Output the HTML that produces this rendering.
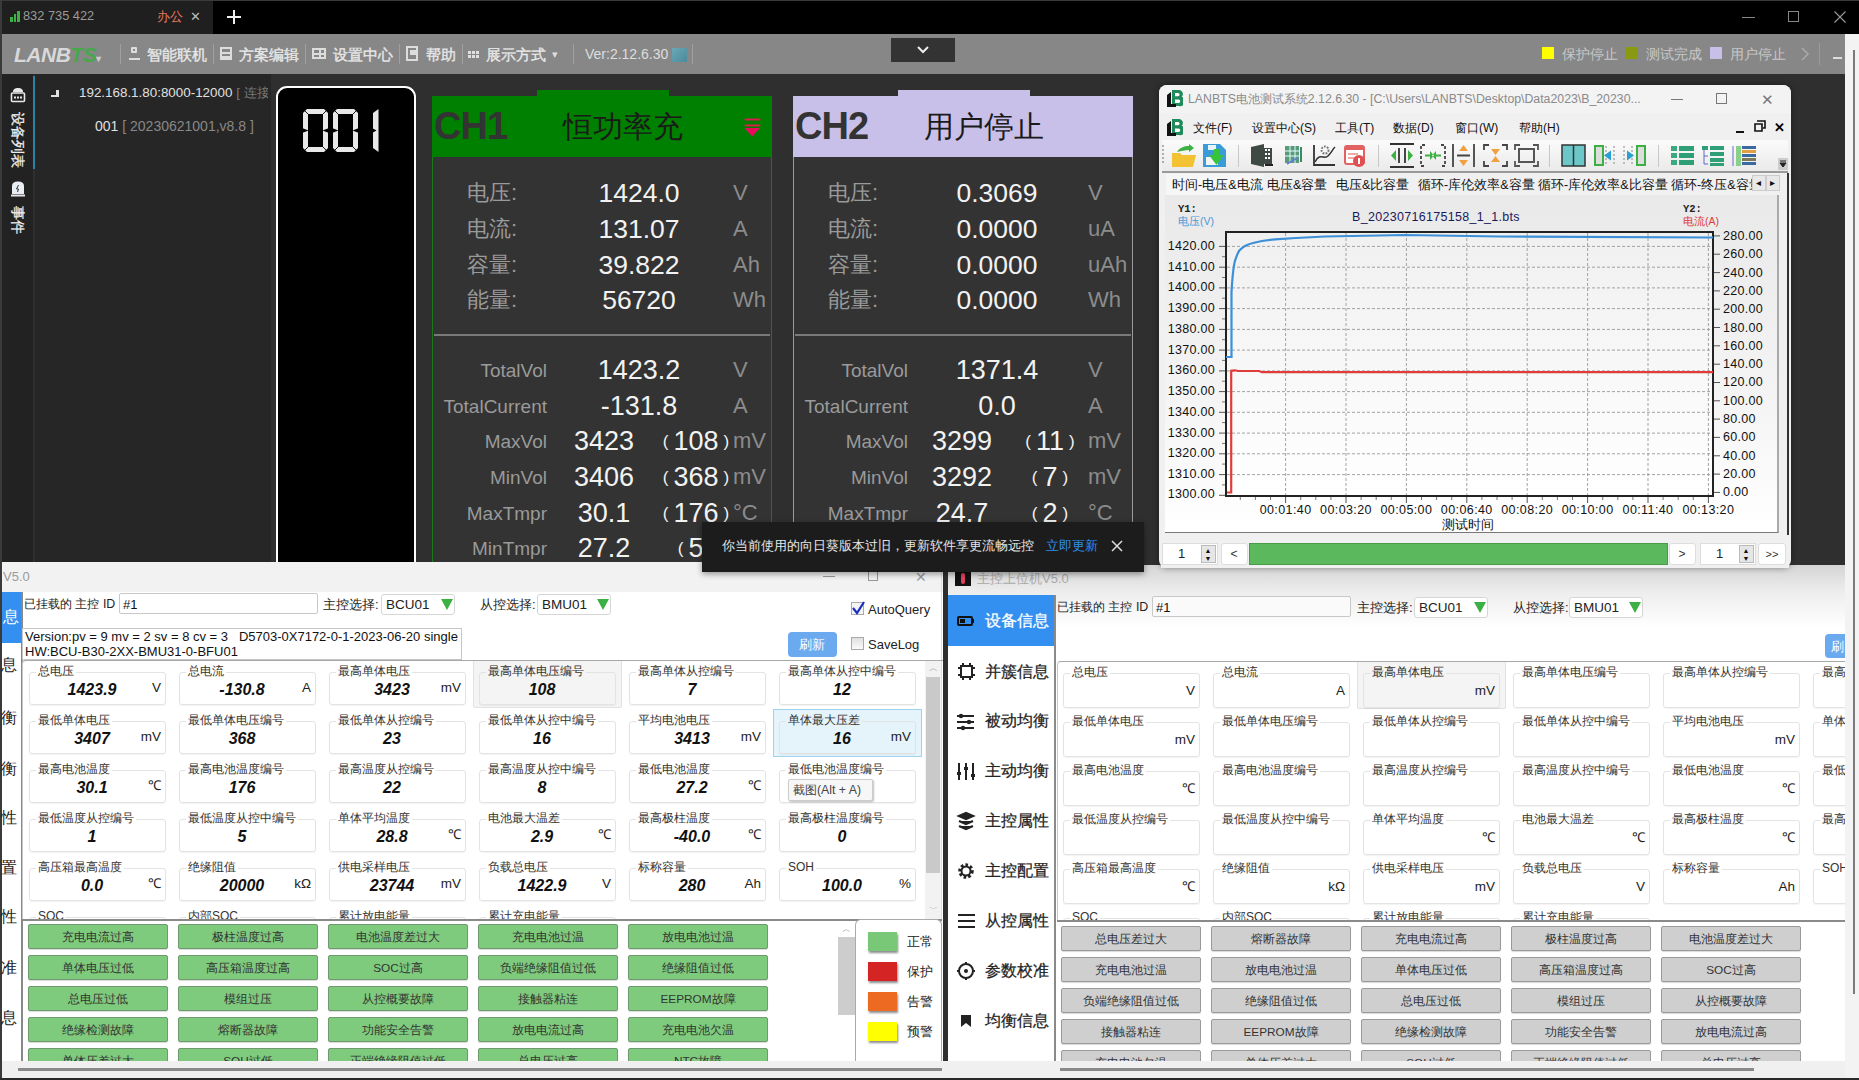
<!DOCTYPE html><html><head><meta charset="utf-8"><style>
*{margin:0;padding:0;box-sizing:border-box}
html,body{width:1859px;height:1080px;overflow:hidden;background:#2b2b2b;font-family:"Liberation Sans",sans-serif}
div{position:absolute}
.t{white-space:nowrap;line-height:1;transform:translateY(-50%)}
.r{white-space:nowrap;line-height:1;transform:translate(-100%,-50%)}
.c{white-space:nowrap;line-height:1;transform:translate(-50%,-50%)}
</style></head><body>
<div style="left:0px;top:0px;width:1859px;height:34px;background:#000"></div>
<div style="left:0px;top:0px;width:213px;height:34px;background:#1f1f1f"></div>
<div style="left:0px;top:0px;width:2px;height:1080px;background:#3a3a3a"></div>
<div style="left:10.0px;top:17px;width:2.5px;height:5px;background:#3cb043"></div>
<div style="left:13.5px;top:14px;width:2.5px;height:8px;background:#3cb043"></div>
<div style="left:17.0px;top:11px;width:2.5px;height:11px;background:#3cb043"></div>
<div class="t" style="left:23px;top:16px;font-size:12.8px;color:#9a9a9a">832 735 422</div>
<div class="t" style="left:157px;top:16px;font-size:13px;color:#e07a5f">办公</div>
<div class="t" style="left:190px;top:16px;font-size:13px;color:#bbb">✕</div>
<div style="left:227px;top:16px;width:14px;height:2px;background:#eee"></div>
<div style="left:233px;top:10px;width:2px;height:14px;background:#eee"></div>
<div style="left:1742px;top:17px;width:13px;height:1px;background:#888"></div>
<div style="left:1788px;top:11px;width:11px;height:11px;border:1px solid #888"></div>
<svg style="position:absolute;left:1833px;top:10px" width="14" height="14"><path d="M1.5 1.5L12.5 12.5M12.5 1.5L1.5 12.5" stroke="#999" stroke-width="1.1"/></svg>
<div style="left:0px;top:0px;width:1859px;height:1px;background:#3a3a3a"></div>
<div style="left:2px;top:34px;width:1843px;height:40px;background:#878787"></div>
<div class="t" style="left:14px;top:54px;font-size:21px;font-weight:bold;font-style:italic;color:#d9d9d9;letter-spacing:-0.5px">LANB<span style="color:#46a84a">TS</span><span style="font-size:10px;color:#ccc;font-style:normal">▾</span></div>
<div style="left:120px;top:44px;width:1px;height:20px;background:#a0a0a0"></div>
<div style="left:213px;top:44px;width:1px;height:20px;background:#a0a0a0"></div>
<div style="left:305px;top:44px;width:1px;height:20px;background:#a0a0a0"></div>
<div style="left:399px;top:44px;width:1px;height:20px;background:#a0a0a0"></div>
<div style="left:462px;top:44px;width:1px;height:20px;background:#a0a0a0"></div>
<div style="left:573px;top:44px;width:1px;height:20px;background:#a0a0a0"></div>
<div style="left:692px;top:44px;width:1px;height:20px;background:#a0a0a0"></div>
<div class="t" style="left:147px;top:54px;font-size:15px;color:#e8e8e8;-webkit-text-stroke:0.35px #e8e8e8">智能联机</div>
<div class="t" style="left:239px;top:54px;font-size:15px;color:#e8e8e8;-webkit-text-stroke:0.35px #e8e8e8">方案编辑</div>
<div class="t" style="left:333px;top:54px;font-size:15px;color:#e8e8e8;-webkit-text-stroke:0.35px #e8e8e8">设置中心</div>
<div class="t" style="left:426px;top:54px;font-size:15px;color:#e8e8e8;-webkit-text-stroke:0.35px #e8e8e8">帮助</div>
<div class="t" style="left:486px;top:54px;font-size:15px;color:#e8e8e8;-webkit-text-stroke:0.35px #e8e8e8">展示方式</div>
<div style="left:129px;top:47px;width:11px;height:13px;border-bottom:2px solid #ddd;"></div>
<div style="left:131px;top:47px;width:6px;height:6px;border:2px solid #ddd;border-radius:1px"></div>
<div style="left:220px;top:47px;width:12px;height:13px;border:2px solid #ddd;background:linear-gradient(#ddd,#ddd) 0 3px/100% 2px no-repeat,linear-gradient(#ddd,#ddd) 0 7px/100% 2px no-repeat"></div>
<div style="left:312px;top:48px;width:14px;height:11px;border:2px solid #ddd;background:linear-gradient(#ddd,#ddd) 5px 0/2px 100% no-repeat,linear-gradient(#ddd,#ddd) 0 3px/100% 2px no-repeat"></div>
<div style="left:406px;top:46px;width:12px;height:15px;border:2px solid #ddd;background:linear-gradient(#ddd,#ddd) 2px 2px/6px 5px no-repeat"></div>
<div style="left:468px;top:51px;width:12px;height:8px;background:linear-gradient(90deg,#e0e0e0 3px,transparent 3px) 0 0/4px 4px;mask:linear-gradient(#000 3px,transparent 3px) 0 0/4px 4px;-webkit-mask:linear-gradient(#000 3px,transparent 3px) 0 0/12px 4px"></div>
<div class="t" style="left:552px;top:54px;font-size:11px;color:#ddd">▾</div>
<div class="t" style="left:585px;top:54px;font-size:14px;color:#dedede">Ver:2.12.6.30</div>
<div style="left:672px;top:48px;width:15px;height:14px;background:linear-gradient(135deg,#6aa8b8,#4a8a9a)"></div>
<div style="left:891px;top:38px;width:64px;height:24px;background:#333"></div>
<svg style="position:absolute;left:916px;top:45px" width="14" height="10"><path d="M2 2 L7 7 L12 2" stroke="#eee" stroke-width="2" fill="none"/></svg>
<div style="left:1542px;top:47px;width:12px;height:12px;background:#ffff00"></div>
<div class="t" style="left:1562px;top:54px;font-size:14px;color:#c8c8c8">保护停止</div>
<div style="left:1626px;top:47px;width:12px;height:12px;background:#8a9a10"></div>
<div class="t" style="left:1646px;top:54px;font-size:14px;color:#c8c8c8">测试完成</div>
<div style="left:1710px;top:47px;width:12px;height:12px;background:#c8c0e8"></div>
<div class="t" style="left:1730px;top:54px;font-size:14px;color:#c8c8c8">用户停止</div>
<svg style="position:absolute;left:1800px;top:47px" width="10" height="14"><path d="M2 1 L8 7 L2 13" stroke="#aaa" stroke-width="1.5" fill="none"/></svg>
<div style="left:1819px;top:43px;width:1px;height:22px;background:#9a9a9a"></div>
<div style="left:1833px;top:57px;width:9px;height:2px;background:#ddd"></div>
<div style="left:1845px;top:34px;width:14px;height:1046px;background:#f3f3f3"></div>
<div style="left:1853px;top:50px;width:2px;height:944px;background:#7a7a7a"></div>
<div style="left:2px;top:74px;width:1843px;height:491px;background:#2f2f2f"></div>
<div style="left:2px;top:74px;width:31px;height:491px;background:#222"></div>
<div style="left:33px;top:76px;width:2px;height:93px;background:#2a82a4"></div>
<div style="left:35px;top:74px;width:236px;height:491px;background:#262626"></div>
<div style="left:56px;top:90px;width:2.5px;height:7px;background:#e0e0e0"></div>
<div style="left:51px;top:94.5px;width:7px;height:2.5px;background:#e0e0e0"></div>
<div style="left:0;top:0;width:1859px;height:1080px;clip-path:inset(0 1591px 0 0)">
<div class="t" style="left:79px;top:93px;font-size:13.4px;color:#e0e0e0">192.168.1.80:8000-12000 <span style="color:#777">[ 连接</span></div>
</div>
<div class="t" style="left:95px;top:126px;font-size:14px;color:#e0e0e0">001 <span style="color:#888">[ 20230621001,v8.8 ]</span></div>
<svg style="position:absolute;left:10px;top:87px" width="16" height="16"><path d="M3 5c0-3 2-4 5-4s5 1 5 4z" fill="#e8e8e8"/><rect x="1.5" y="6" width="13" height="8.5" rx="1" fill="none" stroke="#e8e8e8" stroke-width="1.6"/><path d="M4 10.5h2M7 10.5h2M10 10.5h2" stroke="#e8e8e8" stroke-width="2"/></svg>
<div style="left:9px;top:112px;width:18px;font-size:14px;line-height:18px;color:#eee;writing-mode:vertical-rl;text-orientation:sideways;-webkit-text-stroke:0.3px #eee">设备列表</div>
<svg style="position:absolute;left:11px;top:181px" width="14" height="16"><path d="M1 13V5c0-3 2-4.5 6-4.5s6 1.5 6 4.5v8z" fill="#e8eef4"/><path d="M7.5 4l-2 4h2l-1 3" stroke="#333" stroke-width="1" fill="none"/><rect x="0" y="13.5" width="14" height="2" fill="#e8e8e8"/></svg>
<div style="left:9px;top:206px;width:18px;font-size:14px;line-height:18px;color:#eee;writing-mode:vertical-rl;text-orientation:sideways;-webkit-text-stroke:0.3px #eee">事件</div>
<div style="left:276px;top:86px;width:140px;height:480px;background:#000;border:2px solid #fff;border-bottom:none;border-radius:11px 11px 0 0"></div>
<svg style="position:absolute;left:0;top:0" width="1859" height="1080"><path d="M307,109 L324,109 L328,113 L328,148 L324,152 L307,152 L303,148 L303,113 Z M308,114 L323,114 L323,147 L308,147 Z" fill="#e8e8e8" fill-rule="evenodd"/><path d="M303.8,109.8L308,114M327.2,109.8L323,114M303.8,151.2L308,147M327.2,151.2L323,147" stroke="#000" stroke-width="0.9"/><path d="M302,128.0 L308.5,130.5 L302,133.0Z M329,128.0 L322.5,130.5 L329,133.0Z" fill="#000"/><path d="M337,109 L354,109 L358,113 L358,148 L354,152 L337,152 L333,148 L333,113 Z M338,114 L353,114 L353,147 L338,147 Z" fill="#e8e8e8" fill-rule="evenodd"/><path d="M333.8,109.8L338,114M357.2,109.8L353,114M333.8,151.2L338,147M357.2,151.2L353,147" stroke="#000" stroke-width="0.9"/><path d="M332,128.0 L338.5,130.5 L332,133.0Z M359,128.0 L352.5,130.5 L359,133.0Z" fill="#000"/><path d="M373,113 L378.5,109 L378.5,152 L373,148 Z" fill="#e8e8e8"/><path d="M372,128 L376.5,130.5 L372,133Z" fill="#000"/></svg>
<div style="left:425px;top:74px;width:354px;height:491px;background:#2f2f2f"></div>
<div style="left:537px;top:90px;width:132px;height:7px;background:#008000"></div>
<div style="left:432px;top:96px;width:340px;height:470px;background:#333;border-left:1px solid #1a7a1a;border-right:1px solid #1a7a1a"></div>
<div style="left:432px;top:96px;width:340px;height:61px;background:#008000"></div>
<div class="t" style="left:434px;top:126px;font-size:38px;font-weight:bold;color:#333;letter-spacing:-1px">CH1</div>
<div class="t" style="left:563px;top:127px;font-size:30px;color:#1a1a1a">恒功率充</div>
<div style="left:434px;top:334px;width:336px;height:2px;background:#7a7a7a"></div>
<div class="t" style="left:467px;top:193.0px;font-size:22px;color:#9a9a9a">电压:</div>
<div class="c" style="left:639px;top:193.0px;font-size:26.5px;color:#f2f2f2">1424.0</div>
<div class="t" style="left:733px;top:193.0px;font-size:22px;color:#8c8c8c">V</div>
<div class="t" style="left:467px;top:228.8px;font-size:22px;color:#9a9a9a">电流:</div>
<div class="c" style="left:639px;top:228.8px;font-size:26.5px;color:#f2f2f2">131.07</div>
<div class="t" style="left:733px;top:228.8px;font-size:22px;color:#8c8c8c">A</div>
<div class="t" style="left:467px;top:264.6px;font-size:22px;color:#9a9a9a">容量:</div>
<div class="c" style="left:639px;top:264.6px;font-size:26.5px;color:#f2f2f2">39.822</div>
<div class="t" style="left:733px;top:264.6px;font-size:22px;color:#8c8c8c">Ah</div>
<div class="t" style="left:467px;top:300.4px;font-size:22px;color:#9a9a9a">能量:</div>
<div class="c" style="left:639px;top:300.4px;font-size:26.5px;color:#f2f2f2">56720</div>
<div class="t" style="left:733px;top:300.4px;font-size:22px;color:#8c8c8c">Wh</div>
<div class="r" style="left:547px;top:369.8px;font-size:19px;color:#9a9a9a">TotalVol</div>
<div class="c" style="left:639px;top:369.8px;font-size:27px;color:#f2f2f2">1423.2</div>
<div class="t" style="left:733px;top:369.8px;font-size:22px;color:#8c8c8c">V</div>
<div class="r" style="left:547px;top:405.5px;font-size:19px;color:#9a9a9a">TotalCurrent</div>
<div class="c" style="left:639px;top:405.5px;font-size:27px;color:#f2f2f2">-131.8</div>
<div class="t" style="left:733px;top:405.5px;font-size:22px;color:#8c8c8c">A</div>
<div class="r" style="left:547px;top:441.20000000000005px;font-size:19px;color:#9a9a9a">MaxVol</div>
<div class="c" style="left:604px;top:441.20000000000005px;font-size:27px;color:#f2f2f2">3423</div>
<div class="c" style="left:696px;top:441.20000000000005px;font-size:27px;color:#f2f2f2"><span style="font-size:17px;position:relative;top:-3px;margin-right:5px">(</span>108<span style="font-size:17px;position:relative;top:-3px;margin-left:5px">)</span></div>
<div class="t" style="left:733px;top:441.20000000000005px;font-size:22px;color:#8c8c8c">mV</div>
<div class="r" style="left:547px;top:476.90000000000003px;font-size:19px;color:#9a9a9a">MinVol</div>
<div class="c" style="left:604px;top:476.90000000000003px;font-size:27px;color:#f2f2f2">3406</div>
<div class="c" style="left:696px;top:476.90000000000003px;font-size:27px;color:#f2f2f2"><span style="font-size:17px;position:relative;top:-3px;margin-right:5px">(</span>368<span style="font-size:17px;position:relative;top:-3px;margin-left:5px">)</span></div>
<div class="t" style="left:733px;top:476.90000000000003px;font-size:22px;color:#8c8c8c">mV</div>
<div class="r" style="left:547px;top:512.6px;font-size:19px;color:#9a9a9a">MaxTmpr</div>
<div class="c" style="left:604px;top:512.6px;font-size:27px;color:#f2f2f2">30.1</div>
<div class="c" style="left:696px;top:512.6px;font-size:27px;color:#f2f2f2"><span style="font-size:17px;position:relative;top:-3px;margin-right:5px">(</span>176<span style="font-size:17px;position:relative;top:-3px;margin-left:5px">)</span></div>
<div class="t" style="left:733px;top:512.6px;font-size:22px;color:#8c8c8c">°C</div>
<div class="r" style="left:547px;top:548.3px;font-size:19px;color:#9a9a9a">MinTmpr</div>
<div class="c" style="left:604px;top:548.3px;font-size:27px;color:#f2f2f2">27.2</div>
<div class="c" style="left:696px;top:548.3px;font-size:27px;color:#f2f2f2"><span style="font-size:17px;position:relative;top:-3px;margin-right:5px">(</span>5<span style="font-size:17px;position:relative;top:-3px;margin-left:5px">)</span></div>
<div class="t" style="left:733px;top:548.3px;font-size:22px;color:#8c8c8c">°C</div>
<div style="left:786px;top:74px;width:354px;height:491px;background:#2f2f2f"></div>
<div style="left:898px;top:90px;width:132px;height:7px;background:#c8c0e8"></div>
<div style="left:793px;top:96px;width:340px;height:470px;background:#333;border-left:1px solid #9a9a9a;border-right:1px solid #9a9a9a"></div>
<div style="left:793px;top:96px;width:340px;height:61px;background:#c8c0e8"></div>
<div class="t" style="left:795px;top:126px;font-size:38px;font-weight:bold;color:#333;letter-spacing:-1px">CH2</div>
<div class="t" style="left:924px;top:127px;font-size:30px;color:#1a1a1a">用户停止</div>
<div style="left:795px;top:334px;width:336px;height:2px;background:#7a7a7a"></div>
<div class="t" style="left:828px;top:193.0px;font-size:22px;color:#9a9a9a">电压:</div>
<div class="c" style="left:997px;top:193.0px;font-size:26.5px;color:#f2f2f2">0.3069</div>
<div class="t" style="left:1088px;top:193.0px;font-size:22px;color:#8c8c8c">V</div>
<div class="t" style="left:828px;top:228.8px;font-size:22px;color:#9a9a9a">电流:</div>
<div class="c" style="left:997px;top:228.8px;font-size:26.5px;color:#f2f2f2">0.0000</div>
<div class="t" style="left:1088px;top:228.8px;font-size:22px;color:#8c8c8c">uA</div>
<div class="t" style="left:828px;top:264.6px;font-size:22px;color:#9a9a9a">容量:</div>
<div class="c" style="left:997px;top:264.6px;font-size:26.5px;color:#f2f2f2">0.0000</div>
<div class="t" style="left:1088px;top:264.6px;font-size:22px;color:#8c8c8c">uAh</div>
<div class="t" style="left:828px;top:300.4px;font-size:22px;color:#9a9a9a">能量:</div>
<div class="c" style="left:997px;top:300.4px;font-size:26.5px;color:#f2f2f2">0.0000</div>
<div class="t" style="left:1088px;top:300.4px;font-size:22px;color:#8c8c8c">Wh</div>
<div class="r" style="left:908px;top:369.8px;font-size:19px;color:#9a9a9a">TotalVol</div>
<div class="c" style="left:997px;top:369.8px;font-size:27px;color:#f2f2f2">1371.4</div>
<div class="t" style="left:1088px;top:369.8px;font-size:22px;color:#8c8c8c">V</div>
<div class="r" style="left:908px;top:405.5px;font-size:19px;color:#9a9a9a">TotalCurrent</div>
<div class="c" style="left:997px;top:405.5px;font-size:27px;color:#f2f2f2">0.0</div>
<div class="t" style="left:1088px;top:405.5px;font-size:22px;color:#8c8c8c">A</div>
<div class="r" style="left:908px;top:441.20000000000005px;font-size:19px;color:#9a9a9a">MaxVol</div>
<div class="c" style="left:962px;top:441.20000000000005px;font-size:27px;color:#f2f2f2">3299</div>
<div class="c" style="left:1050px;top:441.20000000000005px;font-size:27px;color:#f2f2f2"><span style="font-size:17px;position:relative;top:-3px;margin-right:5px">(</span>11<span style="font-size:17px;position:relative;top:-3px;margin-left:5px">)</span></div>
<div class="t" style="left:1088px;top:441.20000000000005px;font-size:22px;color:#8c8c8c">mV</div>
<div class="r" style="left:908px;top:476.90000000000003px;font-size:19px;color:#9a9a9a">MinVol</div>
<div class="c" style="left:962px;top:476.90000000000003px;font-size:27px;color:#f2f2f2">3292</div>
<div class="c" style="left:1050px;top:476.90000000000003px;font-size:27px;color:#f2f2f2"><span style="font-size:17px;position:relative;top:-3px;margin-right:5px">(</span>7<span style="font-size:17px;position:relative;top:-3px;margin-left:5px">)</span></div>
<div class="t" style="left:1088px;top:476.90000000000003px;font-size:22px;color:#8c8c8c">mV</div>
<div class="r" style="left:908px;top:512.6px;font-size:19px;color:#9a9a9a">MaxTmpr</div>
<div class="c" style="left:962px;top:512.6px;font-size:27px;color:#f2f2f2">24.7</div>
<div class="c" style="left:1050px;top:512.6px;font-size:27px;color:#f2f2f2"><span style="font-size:17px;position:relative;top:-3px;margin-right:5px">(</span>2<span style="font-size:17px;position:relative;top:-3px;margin-left:5px">)</span></div>
<div class="t" style="left:1088px;top:512.6px;font-size:22px;color:#8c8c8c">°C</div>
<div class="r" style="left:908px;top:548.3px;font-size:19px;color:#9a9a9a">MinTmpr</div>
<div class="c" style="left:962px;top:548.3px;font-size:27px;color:#f2f2f2"></div>
<div class="c" style="left:1050px;top:548.3px;font-size:27px;color:#f2f2f2"><span style="font-size:17px;position:relative;top:-3px;margin-right:5px">(</span><span style="font-size:17px;position:relative;top:-3px;margin-left:5px">)</span></div>
<div class="t" style="left:1088px;top:548.3px;font-size:22px;color:#8c8c8c"></div>
<svg style="position:absolute;left:744px;top:117px" width="17" height="21"><path d="M1.5 2.5h14M1.5 8.5h14" stroke="#d81e4a" stroke-width="2.2" stroke-linecap="round"/><path d="M0.5 11 L16 11 L8.2 19.5 Z" fill="#ec0a5a"/></svg>
<div style="left:2px;top:562px;width:941px;height:499px;background:#fff"></div>
<div style="left:2px;top:562px;width:941px;height:30px;background:#f2f2f2"></div>
<div class="t" style="left:3px;top:576px;font-size:13px;color:#9a9a9a">V5.0</div>
<div style="left:823px;top:576px;width:12px;height:1px;background:#999"></div>
<div style="left:868px;top:570px;width:10px;height:11px;border:1px solid #999"></div>
<div class="t" style="left:915px;top:577px;font-size:14px;color:#999">✕</div>
<div style="left:941px;top:565px;width:1px;height:496px;background:#ddd"></div>
<div style="left:2px;top:592px;width:21px;height:469px;background:#fff;border-right:2px solid #888"></div>
<div style="left:2px;top:592px;width:19px;height:51px;background:#3390f0"></div>
<div class="t" style="left:3px;top:617px;font-size:16px;color:#fff">息</div>
<div class="t" style="left:1px;top:665px;font-size:16px;color:#222">息</div>
<div class="t" style="left:1px;top:718px;font-size:16px;color:#222">衡</div>
<div class="t" style="left:1px;top:769px;font-size:16px;color:#222">衡</div>
<div class="t" style="left:1px;top:818px;font-size:16px;color:#222">性</div>
<div class="t" style="left:1px;top:868px;font-size:16px;color:#222">置</div>
<div class="t" style="left:1px;top:917px;font-size:16px;color:#222">性</div>
<div class="t" style="left:1px;top:968px;font-size:16px;color:#222">准</div>
<div class="t" style="left:1px;top:1018px;font-size:16px;color:#222">息</div>
<div class="t" style="left:24px;top:604px;font-size:12.4px;color:#222">已挂载的 主控 ID</div>
<div style="left:119px;top:593px;width:199px;height:21px;background:#fff;border:1px solid #c8c8c8;border-radius:2px"></div>
<div class="t" style="left:123px;top:604px;font-size:13px;color:#111">#1</div>
<div class="t" style="left:323px;top:604px;font-size:13px;color:#222">主控选择:</div>
<div style="left:381px;top:594px;width:74px;height:21px;background:#fff;border:1px solid #d6d6d6;border-radius:3px"></div>
<div class="t" style="left:386px;top:604.5px;font-size:13.5px;color:#222">BCU01</div>
<svg style="position:absolute;left:441px;top:599px" width="12" height="12"><path d="M0 0h12L6 11z" fill="#3cb043"/></svg>
<div class="t" style="left:480px;top:604px;font-size:13px;color:#222">从控选择:</div>
<div style="left:537px;top:594px;width:74px;height:21px;background:#fff;border:1px solid #d6d6d6;border-radius:3px"></div>
<div class="t" style="left:542px;top:604.5px;font-size:13.5px;color:#222">BMU01</div>
<svg style="position:absolute;left:597px;top:599px" width="12" height="12"><path d="M0 0h12L6 11z" fill="#3cb043"/></svg>
<div style="left:851px;top:602px;width:13px;height:13px;background:#f4f4f4;border:1px solid #aaa"></div>
<svg style="position:absolute;left:850px;top:600px" width="16" height="16"><path d="M3 8l4 5 7-11" stroke="#1a2fc0" stroke-width="2.2" fill="none"/></svg>
<div class="t" style="left:868px;top:609px;font-size:13px;color:#222">AutoQuery</div>
<div style="left:22px;top:628px;width:440px;height:32px;background:#fff;border:1px solid #c6c6c6"></div>
<div class="t" style="left:25px;top:636px;font-size:13px;color:#111">Version:pv = 9 mv = 2 sv = 8 cv = 3 &nbsp; D5703-0X7172-0-1-2023-06-20 single</div>
<div class="t" style="left:25px;top:651px;font-size:13px;color:#111">HW:BCU-B30-2XX-BMU31-0-BFU01</div>
<div style="left:788px;top:632px;width:49px;height:25px;background:#6caaf0;border-radius:4px"></div>
<div class="c" style="left:812px;top:644px;font-size:13px;color:#fff">刷新</div>
<div style="left:851px;top:637px;width:13px;height:13px;background:linear-gradient(#e0e0e0,#fafafa);border:1px solid #aaa"></div>
<div class="t" style="left:868px;top:644px;font-size:13px;color:#222">SaveLog</div>
<div style="left:22px;top:660px;width:921px;height:261px;border-top:1px solid #a8a8a8;border-left:1px solid #c8c8c8;border-radius:4px 0 0 0"></div>
<div style="left:0;top:0;width:1859px;height:1080px;clip-path:inset(661px 935px 161px 23px)">
<div style="left:29px;top:672px;width:137px;height:33px;border:1px solid #e3e3e3;border-radius:3px;box-shadow:0 1px 1px rgba(0,0,0,.05)"></div>
<div class="t" style="left:36px;top:671px;font-size:12px;color:#333;background:#fff;padding:0 2px">总电压</div>
<div class="c" style="left:92px;top:690px;font-size:16px;font-weight:bold;font-style:italic;color:#111">1423.9</div>
<div class="r" style="left:161px;top:688px;font-size:13.5px;color:#222">V</div>
<div style="left:179px;top:672px;width:137px;height:33px;border:1px solid #e3e3e3;border-radius:3px;box-shadow:0 1px 1px rgba(0,0,0,.05)"></div>
<div class="t" style="left:186px;top:671px;font-size:12px;color:#333;background:#fff;padding:0 2px">总电流</div>
<div class="c" style="left:242px;top:690px;font-size:16px;font-weight:bold;font-style:italic;color:#111">-130.8</div>
<div class="r" style="left:311px;top:688px;font-size:13.5px;color:#222">A</div>
<div style="left:329px;top:672px;width:137px;height:33px;border:1px solid #e3e3e3;border-radius:3px;box-shadow:0 1px 1px rgba(0,0,0,.05)"></div>
<div class="t" style="left:336px;top:671px;font-size:12px;color:#333;background:#fff;padding:0 2px">最高单体电压</div>
<div class="c" style="left:392px;top:690px;font-size:16px;font-weight:bold;font-style:italic;color:#111">3423</div>
<div class="r" style="left:461px;top:688px;font-size:13.5px;color:#222">mV</div>
<div style="left:473px;top:660px;width:149px;height:48px;background:#f4f4f4;border:1px solid #e2e2e2;border-radius:2px"></div>
<div style="left:479px;top:672px;width:137px;height:33px;border:1px solid #e3e3e3;border-radius:3px;box-shadow:0 1px 1px rgba(0,0,0,.05)"></div>
<div class="t" style="left:486px;top:671px;font-size:12px;color:#333;background:#f4f4f4;padding:0 2px">最高单体电压编号</div>
<div class="c" style="left:542px;top:690px;font-size:16px;font-weight:bold;font-style:italic;color:#111">108</div>
<div style="left:629px;top:672px;width:137px;height:33px;border:1px solid #e3e3e3;border-radius:3px;box-shadow:0 1px 1px rgba(0,0,0,.05)"></div>
<div class="t" style="left:636px;top:671px;font-size:12px;color:#333;background:#fff;padding:0 2px">最高单体从控编号</div>
<div class="c" style="left:692px;top:690px;font-size:16px;font-weight:bold;font-style:italic;color:#111">7</div>
<div style="left:779px;top:672px;width:137px;height:33px;border:1px solid #e3e3e3;border-radius:3px;box-shadow:0 1px 1px rgba(0,0,0,.05)"></div>
<div class="t" style="left:786px;top:671px;font-size:12px;color:#333;background:#fff;padding:0 2px">最高单体从控中编号</div>
<div class="c" style="left:842px;top:690px;font-size:16px;font-weight:bold;font-style:italic;color:#111">12</div>
<div style="left:29px;top:721px;width:137px;height:33px;border:1px solid #e3e3e3;border-radius:3px;box-shadow:0 1px 1px rgba(0,0,0,.05)"></div>
<div class="t" style="left:36px;top:720px;font-size:12px;color:#333;background:#fff;padding:0 2px">最低单体电压</div>
<div class="c" style="left:92px;top:739px;font-size:16px;font-weight:bold;font-style:italic;color:#111">3407</div>
<div class="r" style="left:161px;top:737px;font-size:13.5px;color:#222">mV</div>
<div style="left:179px;top:721px;width:137px;height:33px;border:1px solid #e3e3e3;border-radius:3px;box-shadow:0 1px 1px rgba(0,0,0,.05)"></div>
<div class="t" style="left:186px;top:720px;font-size:12px;color:#333;background:#fff;padding:0 2px">最低单体电压编号</div>
<div class="c" style="left:242px;top:739px;font-size:16px;font-weight:bold;font-style:italic;color:#111">368</div>
<div style="left:329px;top:721px;width:137px;height:33px;border:1px solid #e3e3e3;border-radius:3px;box-shadow:0 1px 1px rgba(0,0,0,.05)"></div>
<div class="t" style="left:336px;top:720px;font-size:12px;color:#333;background:#fff;padding:0 2px">最低单体从控编号</div>
<div class="c" style="left:392px;top:739px;font-size:16px;font-weight:bold;font-style:italic;color:#111">23</div>
<div style="left:479px;top:721px;width:137px;height:33px;border:1px solid #e3e3e3;border-radius:3px;box-shadow:0 1px 1px rgba(0,0,0,.05)"></div>
<div class="t" style="left:486px;top:720px;font-size:12px;color:#333;background:#fff;padding:0 2px">最低单体从控中编号</div>
<div class="c" style="left:542px;top:739px;font-size:16px;font-weight:bold;font-style:italic;color:#111">16</div>
<div style="left:629px;top:721px;width:137px;height:33px;border:1px solid #e3e3e3;border-radius:3px;box-shadow:0 1px 1px rgba(0,0,0,.05)"></div>
<div class="t" style="left:636px;top:720px;font-size:12px;color:#333;background:#fff;padding:0 2px">平均电池电压</div>
<div class="c" style="left:692px;top:739px;font-size:16px;font-weight:bold;font-style:italic;color:#111">3413</div>
<div class="r" style="left:761px;top:737px;font-size:13.5px;color:#222">mV</div>
<div style="left:773px;top:709px;width:149px;height:48px;background:#e5f3fb;border:1px solid #9ed3ee"></div>
<div style="left:779px;top:721px;width:137px;height:33px;border:1px solid #e3e3e3;border-radius:3px;box-shadow:0 1px 1px rgba(0,0,0,.05)"></div>
<div class="t" style="left:786px;top:720px;font-size:12px;color:#333;background:#e5f3fb;padding:0 2px">单体最大压差</div>
<div class="c" style="left:842px;top:739px;font-size:16px;font-weight:bold;font-style:italic;color:#111">16</div>
<div class="r" style="left:911px;top:737px;font-size:13.5px;color:#222">mV</div>
<div style="left:29px;top:770px;width:137px;height:33px;border:1px solid #e3e3e3;border-radius:3px;box-shadow:0 1px 1px rgba(0,0,0,.05)"></div>
<div class="t" style="left:36px;top:769px;font-size:12px;color:#333;background:#fff;padding:0 2px">最高电池温度</div>
<div class="c" style="left:92px;top:788px;font-size:16px;font-weight:bold;font-style:italic;color:#111">30.1</div>
<div class="r" style="left:161px;top:786px;font-size:13.5px;color:#222">℃</div>
<div style="left:179px;top:770px;width:137px;height:33px;border:1px solid #e3e3e3;border-radius:3px;box-shadow:0 1px 1px rgba(0,0,0,.05)"></div>
<div class="t" style="left:186px;top:769px;font-size:12px;color:#333;background:#fff;padding:0 2px">最高电池温度编号</div>
<div class="c" style="left:242px;top:788px;font-size:16px;font-weight:bold;font-style:italic;color:#111">176</div>
<div style="left:329px;top:770px;width:137px;height:33px;border:1px solid #e3e3e3;border-radius:3px;box-shadow:0 1px 1px rgba(0,0,0,.05)"></div>
<div class="t" style="left:336px;top:769px;font-size:12px;color:#333;background:#fff;padding:0 2px">最高温度从控编号</div>
<div class="c" style="left:392px;top:788px;font-size:16px;font-weight:bold;font-style:italic;color:#111">22</div>
<div style="left:479px;top:770px;width:137px;height:33px;border:1px solid #e3e3e3;border-radius:3px;box-shadow:0 1px 1px rgba(0,0,0,.05)"></div>
<div class="t" style="left:486px;top:769px;font-size:12px;color:#333;background:#fff;padding:0 2px">最高温度从控中编号</div>
<div class="c" style="left:542px;top:788px;font-size:16px;font-weight:bold;font-style:italic;color:#111">8</div>
<div style="left:629px;top:770px;width:137px;height:33px;border:1px solid #e3e3e3;border-radius:3px;box-shadow:0 1px 1px rgba(0,0,0,.05)"></div>
<div class="t" style="left:636px;top:769px;font-size:12px;color:#333;background:#fff;padding:0 2px">最低电池温度</div>
<div class="c" style="left:692px;top:788px;font-size:16px;font-weight:bold;font-style:italic;color:#111">27.2</div>
<div class="r" style="left:761px;top:786px;font-size:13.5px;color:#222">℃</div>
<div style="left:779px;top:770px;width:137px;height:33px;border:1px solid #e3e3e3;border-radius:3px;box-shadow:0 1px 1px rgba(0,0,0,.05)"></div>
<div class="t" style="left:786px;top:769px;font-size:12px;color:#333;background:#fff;padding:0 2px">最低电池温度编号</div>
<div style="left:29px;top:819px;width:137px;height:33px;border:1px solid #e3e3e3;border-radius:3px;box-shadow:0 1px 1px rgba(0,0,0,.05)"></div>
<div class="t" style="left:36px;top:818px;font-size:12px;color:#333;background:#fff;padding:0 2px">最低温度从控编号</div>
<div class="c" style="left:92px;top:837px;font-size:16px;font-weight:bold;font-style:italic;color:#111">1</div>
<div style="left:179px;top:819px;width:137px;height:33px;border:1px solid #e3e3e3;border-radius:3px;box-shadow:0 1px 1px rgba(0,0,0,.05)"></div>
<div class="t" style="left:186px;top:818px;font-size:12px;color:#333;background:#fff;padding:0 2px">最低温度从控中编号</div>
<div class="c" style="left:242px;top:837px;font-size:16px;font-weight:bold;font-style:italic;color:#111">5</div>
<div style="left:329px;top:819px;width:137px;height:33px;border:1px solid #e3e3e3;border-radius:3px;box-shadow:0 1px 1px rgba(0,0,0,.05)"></div>
<div class="t" style="left:336px;top:818px;font-size:12px;color:#333;background:#fff;padding:0 2px">单体平均温度</div>
<div class="c" style="left:392px;top:837px;font-size:16px;font-weight:bold;font-style:italic;color:#111">28.8</div>
<div class="r" style="left:461px;top:835px;font-size:13.5px;color:#222">℃</div>
<div style="left:479px;top:819px;width:137px;height:33px;border:1px solid #e3e3e3;border-radius:3px;box-shadow:0 1px 1px rgba(0,0,0,.05)"></div>
<div class="t" style="left:486px;top:818px;font-size:12px;color:#333;background:#fff;padding:0 2px">电池最大温差</div>
<div class="c" style="left:542px;top:837px;font-size:16px;font-weight:bold;font-style:italic;color:#111">2.9</div>
<div class="r" style="left:611px;top:835px;font-size:13.5px;color:#222">℃</div>
<div style="left:629px;top:819px;width:137px;height:33px;border:1px solid #e3e3e3;border-radius:3px;box-shadow:0 1px 1px rgba(0,0,0,.05)"></div>
<div class="t" style="left:636px;top:818px;font-size:12px;color:#333;background:#fff;padding:0 2px">最高极柱温度</div>
<div class="c" style="left:692px;top:837px;font-size:16px;font-weight:bold;font-style:italic;color:#111">-40.0</div>
<div class="r" style="left:761px;top:835px;font-size:13.5px;color:#222">℃</div>
<div style="left:779px;top:819px;width:137px;height:33px;border:1px solid #e3e3e3;border-radius:3px;box-shadow:0 1px 1px rgba(0,0,0,.05)"></div>
<div class="t" style="left:786px;top:818px;font-size:12px;color:#333;background:#fff;padding:0 2px">最高极柱温度编号</div>
<div class="c" style="left:842px;top:837px;font-size:16px;font-weight:bold;font-style:italic;color:#111">0</div>
<div style="left:29px;top:868px;width:137px;height:33px;border:1px solid #e3e3e3;border-radius:3px;box-shadow:0 1px 1px rgba(0,0,0,.05)"></div>
<div class="t" style="left:36px;top:867px;font-size:12px;color:#333;background:#fff;padding:0 2px">高压箱最高温度</div>
<div class="c" style="left:92px;top:886px;font-size:16px;font-weight:bold;font-style:italic;color:#111">0.0</div>
<div class="r" style="left:161px;top:884px;font-size:13.5px;color:#222">℃</div>
<div style="left:179px;top:868px;width:137px;height:33px;border:1px solid #e3e3e3;border-radius:3px;box-shadow:0 1px 1px rgba(0,0,0,.05)"></div>
<div class="t" style="left:186px;top:867px;font-size:12px;color:#333;background:#fff;padding:0 2px">绝缘阻值</div>
<div class="c" style="left:242px;top:886px;font-size:16px;font-weight:bold;font-style:italic;color:#111">20000</div>
<div class="r" style="left:311px;top:884px;font-size:13.5px;color:#222">kΩ</div>
<div style="left:329px;top:868px;width:137px;height:33px;border:1px solid #e3e3e3;border-radius:3px;box-shadow:0 1px 1px rgba(0,0,0,.05)"></div>
<div class="t" style="left:336px;top:867px;font-size:12px;color:#333;background:#fff;padding:0 2px">供电采样电压</div>
<div class="c" style="left:392px;top:886px;font-size:16px;font-weight:bold;font-style:italic;color:#111">23744</div>
<div class="r" style="left:461px;top:884px;font-size:13.5px;color:#222">mV</div>
<div style="left:479px;top:868px;width:137px;height:33px;border:1px solid #e3e3e3;border-radius:3px;box-shadow:0 1px 1px rgba(0,0,0,.05)"></div>
<div class="t" style="left:486px;top:867px;font-size:12px;color:#333;background:#fff;padding:0 2px">负载总电压</div>
<div class="c" style="left:542px;top:886px;font-size:16px;font-weight:bold;font-style:italic;color:#111">1422.9</div>
<div class="r" style="left:611px;top:884px;font-size:13.5px;color:#222">V</div>
<div style="left:629px;top:868px;width:137px;height:33px;border:1px solid #e3e3e3;border-radius:3px;box-shadow:0 1px 1px rgba(0,0,0,.05)"></div>
<div class="t" style="left:636px;top:867px;font-size:12px;color:#333;background:#fff;padding:0 2px">标称容量</div>
<div class="c" style="left:692px;top:886px;font-size:16px;font-weight:bold;font-style:italic;color:#111">280</div>
<div class="r" style="left:761px;top:884px;font-size:13.5px;color:#222">Ah</div>
<div style="left:779px;top:868px;width:137px;height:33px;border:1px solid #e3e3e3;border-radius:3px;box-shadow:0 1px 1px rgba(0,0,0,.05)"></div>
<div class="t" style="left:786px;top:867px;font-size:12px;color:#333;background:#fff;padding:0 2px">SOH</div>
<div class="c" style="left:842px;top:886px;font-size:16px;font-weight:bold;font-style:italic;color:#111">100.0</div>
<div class="r" style="left:911px;top:884px;font-size:13.5px;color:#222">%</div>
<div style="left:29px;top:917px;width:137px;height:33px;border:1px solid #e3e3e3;border-radius:3px;box-shadow:0 1px 1px rgba(0,0,0,.05)"></div>
<div class="t" style="left:36px;top:916px;font-size:12px;color:#333;background:#fff;padding:0 2px">SOC</div>
<div style="left:179px;top:917px;width:137px;height:33px;border:1px solid #e3e3e3;border-radius:3px;box-shadow:0 1px 1px rgba(0,0,0,.05)"></div>
<div class="t" style="left:186px;top:916px;font-size:12px;color:#333;background:#fff;padding:0 2px">内部SOC</div>
<div style="left:329px;top:917px;width:137px;height:33px;border:1px solid #e3e3e3;border-radius:3px;box-shadow:0 1px 1px rgba(0,0,0,.05)"></div>
<div class="t" style="left:336px;top:916px;font-size:12px;color:#333;background:#fff;padding:0 2px">累计放电能量</div>
<div style="left:479px;top:917px;width:137px;height:33px;border:1px solid #e3e3e3;border-radius:3px;box-shadow:0 1px 1px rgba(0,0,0,.05)"></div>
<div class="t" style="left:486px;top:916px;font-size:12px;color:#333;background:#fff;padding:0 2px">累计充电能量</div>
</div>
<div style="left:788px;top:779px;width:85px;height:22px;background:#f7f7f7;border:1px solid #ccc;border-radius:2px;box-shadow:1px 1px 2px rgba(0,0,0,.25)"></div>
<div class="t" style="left:793px;top:790px;font-size:12.3px;color:#444">截图(Alt + A)</div>
<div style="left:925px;top:661px;width:16px;height:259px;background:#f2f2f2"></div>
<div style="left:926px;top:677px;width:14px;height:196px;background:#c9c9c9"></div>
<div class="c" style="left:933px;top:668px;font-size:9px;color:#999">︿</div>
<div class="c" style="left:933px;top:909px;font-size:9px;color:#999">﹀</div>
<div style="left:22px;top:919px;width:920px;height:2px;background:#8a8a8a"></div>
<div style="left:0;top:0;width:1859px;height:1080px;clip-path:inset(921px 1021px 19px 23px)">
<div style="left:28px;top:924px;width:140px;height:25px;background:#7ecb7e;border:1px solid #6f9a6f;border-radius:2px;box-shadow:0 1px 1px rgba(0,0,0,.15)"></div>
<div class="c" style="left:98px;top:937.5px;font-size:11.8px;color:#333">充电电流过高</div>
<div style="left:178px;top:924px;width:140px;height:25px;background:#7ecb7e;border:1px solid #6f9a6f;border-radius:2px;box-shadow:0 1px 1px rgba(0,0,0,.15)"></div>
<div class="c" style="left:248px;top:937.5px;font-size:11.8px;color:#333">极柱温度过高</div>
<div style="left:328px;top:924px;width:140px;height:25px;background:#7ecb7e;border:1px solid #6f9a6f;border-radius:2px;box-shadow:0 1px 1px rgba(0,0,0,.15)"></div>
<div class="c" style="left:398px;top:937.5px;font-size:11.8px;color:#333">电池温度差过大</div>
<div style="left:478px;top:924px;width:140px;height:25px;background:#7ecb7e;border:1px solid #6f9a6f;border-radius:2px;box-shadow:0 1px 1px rgba(0,0,0,.15)"></div>
<div class="c" style="left:548px;top:937.5px;font-size:11.8px;color:#333">充电电池过温</div>
<div style="left:628px;top:924px;width:140px;height:25px;background:#7ecb7e;border:1px solid #6f9a6f;border-radius:2px;box-shadow:0 1px 1px rgba(0,0,0,.15)"></div>
<div class="c" style="left:698px;top:937.5px;font-size:11.8px;color:#333">放电电池过温</div>
<div style="left:28px;top:955px;width:140px;height:25px;background:#7ecb7e;border:1px solid #6f9a6f;border-radius:2px;box-shadow:0 1px 1px rgba(0,0,0,.15)"></div>
<div class="c" style="left:98px;top:968.5px;font-size:11.8px;color:#333">单体电压过低</div>
<div style="left:178px;top:955px;width:140px;height:25px;background:#7ecb7e;border:1px solid #6f9a6f;border-radius:2px;box-shadow:0 1px 1px rgba(0,0,0,.15)"></div>
<div class="c" style="left:248px;top:968.5px;font-size:11.8px;color:#333">高压箱温度过高</div>
<div style="left:328px;top:955px;width:140px;height:25px;background:#7ecb7e;border:1px solid #6f9a6f;border-radius:2px;box-shadow:0 1px 1px rgba(0,0,0,.15)"></div>
<div class="c" style="left:398px;top:968.5px;font-size:11.8px;color:#333">SOC过高</div>
<div style="left:478px;top:955px;width:140px;height:25px;background:#7ecb7e;border:1px solid #6f9a6f;border-radius:2px;box-shadow:0 1px 1px rgba(0,0,0,.15)"></div>
<div class="c" style="left:548px;top:968.5px;font-size:11.8px;color:#333">负端绝缘阻值过低</div>
<div style="left:628px;top:955px;width:140px;height:25px;background:#7ecb7e;border:1px solid #6f9a6f;border-radius:2px;box-shadow:0 1px 1px rgba(0,0,0,.15)"></div>
<div class="c" style="left:698px;top:968.5px;font-size:11.8px;color:#333">绝缘阻值过低</div>
<div style="left:28px;top:986px;width:140px;height:25px;background:#7ecb7e;border:1px solid #6f9a6f;border-radius:2px;box-shadow:0 1px 1px rgba(0,0,0,.15)"></div>
<div class="c" style="left:98px;top:999.5px;font-size:11.8px;color:#333">总电压过低</div>
<div style="left:178px;top:986px;width:140px;height:25px;background:#7ecb7e;border:1px solid #6f9a6f;border-radius:2px;box-shadow:0 1px 1px rgba(0,0,0,.15)"></div>
<div class="c" style="left:248px;top:999.5px;font-size:11.8px;color:#333">模组过压</div>
<div style="left:328px;top:986px;width:140px;height:25px;background:#7ecb7e;border:1px solid #6f9a6f;border-radius:2px;box-shadow:0 1px 1px rgba(0,0,0,.15)"></div>
<div class="c" style="left:398px;top:999.5px;font-size:11.8px;color:#333">从控概要故障</div>
<div style="left:478px;top:986px;width:140px;height:25px;background:#7ecb7e;border:1px solid #6f9a6f;border-radius:2px;box-shadow:0 1px 1px rgba(0,0,0,.15)"></div>
<div class="c" style="left:548px;top:999.5px;font-size:11.8px;color:#333">接触器粘连</div>
<div style="left:628px;top:986px;width:140px;height:25px;background:#7ecb7e;border:1px solid #6f9a6f;border-radius:2px;box-shadow:0 1px 1px rgba(0,0,0,.15)"></div>
<div class="c" style="left:698px;top:999.5px;font-size:11.8px;color:#333">EEPROM故障</div>
<div style="left:28px;top:1017px;width:140px;height:25px;background:#7ecb7e;border:1px solid #6f9a6f;border-radius:2px;box-shadow:0 1px 1px rgba(0,0,0,.15)"></div>
<div class="c" style="left:98px;top:1030.5px;font-size:11.8px;color:#333">绝缘检测故障</div>
<div style="left:178px;top:1017px;width:140px;height:25px;background:#7ecb7e;border:1px solid #6f9a6f;border-radius:2px;box-shadow:0 1px 1px rgba(0,0,0,.15)"></div>
<div class="c" style="left:248px;top:1030.5px;font-size:11.8px;color:#333">熔断器故障</div>
<div style="left:328px;top:1017px;width:140px;height:25px;background:#7ecb7e;border:1px solid #6f9a6f;border-radius:2px;box-shadow:0 1px 1px rgba(0,0,0,.15)"></div>
<div class="c" style="left:398px;top:1030.5px;font-size:11.8px;color:#333">功能安全告警</div>
<div style="left:478px;top:1017px;width:140px;height:25px;background:#7ecb7e;border:1px solid #6f9a6f;border-radius:2px;box-shadow:0 1px 1px rgba(0,0,0,.15)"></div>
<div class="c" style="left:548px;top:1030.5px;font-size:11.8px;color:#333">放电电流过高</div>
<div style="left:628px;top:1017px;width:140px;height:25px;background:#7ecb7e;border:1px solid #6f9a6f;border-radius:2px;box-shadow:0 1px 1px rgba(0,0,0,.15)"></div>
<div class="c" style="left:698px;top:1030.5px;font-size:11.8px;color:#333">充电电池欠温</div>
<div style="left:28px;top:1048px;width:140px;height:25px;background:#7ecb7e;border:1px solid #6f9a6f;border-radius:2px;box-shadow:0 1px 1px rgba(0,0,0,.15)"></div>
<div class="c" style="left:98px;top:1061.5px;font-size:11.8px;color:#333">单体压差过大</div>
<div style="left:178px;top:1048px;width:140px;height:25px;background:#7ecb7e;border:1px solid #6f9a6f;border-radius:2px;box-shadow:0 1px 1px rgba(0,0,0,.15)"></div>
<div class="c" style="left:248px;top:1061.5px;font-size:11.8px;color:#333">SOH过低</div>
<div style="left:328px;top:1048px;width:140px;height:25px;background:#7ecb7e;border:1px solid #6f9a6f;border-radius:2px;box-shadow:0 1px 1px rgba(0,0,0,.15)"></div>
<div class="c" style="left:398px;top:1061.5px;font-size:11.8px;color:#333">正端绝缘阻值过低</div>
<div style="left:478px;top:1048px;width:140px;height:25px;background:#7ecb7e;border:1px solid #6f9a6f;border-radius:2px;box-shadow:0 1px 1px rgba(0,0,0,.15)"></div>
<div class="c" style="left:548px;top:1061.5px;font-size:11.8px;color:#333">总电压过高</div>
<div style="left:628px;top:1048px;width:140px;height:25px;background:#7ecb7e;border:1px solid #6f9a6f;border-radius:2px;box-shadow:0 1px 1px rgba(0,0,0,.15)"></div>
<div class="c" style="left:698px;top:1061.5px;font-size:11.8px;color:#333">NTC故障</div>
</div>
<div style="left:838px;top:921px;width:17px;height:140px;background:#fff"></div>
<div style="left:838px;top:937px;width:17px;height:78px;background:#cdcdcd"></div>
<div class="c" style="left:846px;top:929px;font-size:9px;color:#999">︿</div>
<div style="left:855px;top:919px;width:87px;height:142px;background:#fff;border:1px solid #aaa;border-bottom:none;border-radius:6px 6px 0 0"></div>
<div style="left:868px;top:932px;width:29px;height:19px;background:#78c878;box-shadow:1px 2px 2px rgba(0,0,0,.45)"></div>
<div class="t" style="left:907px;top:940.5px;font-size:13px;color:#222">正常</div>
<div style="left:868px;top:962px;width:29px;height:19px;background:#d42424;box-shadow:1px 2px 2px rgba(0,0,0,.45)"></div>
<div class="t" style="left:907px;top:970.5px;font-size:13px;color:#222">保护</div>
<div style="left:868px;top:992px;width:29px;height:19px;background:#ec6a22;box-shadow:1px 2px 2px rgba(0,0,0,.45)"></div>
<div class="t" style="left:907px;top:1000.5px;font-size:13px;color:#222">告警</div>
<div style="left:868px;top:1022px;width:29px;height:19px;background:#ffff00;box-shadow:1px 2px 2px rgba(0,0,0,.45)"></div>
<div class="t" style="left:907px;top:1030.5px;font-size:13px;color:#222">预警</div>
<div style="left:2px;top:1061px;width:941px;height:17px;background:#f0f0f0"></div>
<div style="left:18px;top:1068px;width:924px;height:3px;background:#8a8a8a"></div>
<div style="left:943px;top:565px;width:5px;height:496px;background:#2e2e2e"></div>
<div style="left:948px;top:565px;width:897px;height:496px;background:#fff"></div>
<div style="left:948px;top:565px;width:897px;height:65px;background:linear-gradient(#d4d4d4,#ededed 40%,#fdfdfd 90%,#fff)"></div>
<div style="left:955px;top:571px;width:16px;height:15px;background:#111"></div>
<div style="left:961px;top:573px;width:4px;height:11px;background:#e04060;border-radius:2px"></div>
<div class="t" style="left:977px;top:578px;font-size:13px;color:#a8a8a8">主控上位机V5.0</div>
<div style="left:948px;top:595px;width:108px;height:466px;background:#fff;border-right:2px solid #8a8a8a"></div>
<div style="left:948px;top:595px;width:106px;height:51px;background:#3390f0"></div>
<div class="t" style="left:985px;top:621px;font-size:15.8px;color:#fff;-webkit-text-stroke:0.25px #fff">设备信息</div>
<div class="t" style="left:985px;top:672px;font-size:15.8px;color:#222;-webkit-text-stroke:0.25px #222">并簇信息</div>
<div class="t" style="left:985px;top:721px;font-size:15.8px;color:#222;-webkit-text-stroke:0.25px #222">被动均衡</div>
<div class="t" style="left:985px;top:771px;font-size:15.8px;color:#222;-webkit-text-stroke:0.25px #222">主动均衡</div>
<div class="t" style="left:985px;top:821px;font-size:15.8px;color:#222;-webkit-text-stroke:0.25px #222">主控属性</div>
<div class="t" style="left:985px;top:871px;font-size:15.8px;color:#222;-webkit-text-stroke:0.25px #222">主控配置</div>
<div class="t" style="left:985px;top:921px;font-size:15.8px;color:#222;-webkit-text-stroke:0.25px #222">从控属性</div>
<div class="t" style="left:985px;top:971px;font-size:15.8px;color:#222;-webkit-text-stroke:0.25px #222">参数校准</div>
<div class="t" style="left:985px;top:1021px;font-size:15.8px;color:#222;-webkit-text-stroke:0.25px #222">均衡信息</div>
<svg style="position:absolute;left:0;top:0" width="1859" height="1080"><rect x="958" y="617" width="14" height="8" rx="1" fill="none" stroke="#111" stroke-width="2"/><rect x="972" y="619" width="2" height="4" fill="#111"/><rect x="960" y="619" width="5" height="4" fill="#111"/><rect x="961" y="666" width="11" height="11" fill="none" stroke="#222" stroke-width="2"/><path d="M958 668h3M972 668h3M958 675h3M972 675h3M963 663v3M970 663v3M963 677v3M970 677v3" stroke="#222" stroke-width="2"/><path d="M957 716h17M957 722h17M957 728h17" stroke="#222" stroke-width="2"/><circle cx="961" cy="716" r="2.2" fill="#222"/><circle cx="969" cy="722" r="2.2" fill="#222"/><circle cx="963" cy="728" r="2.2" fill="#222"/><path d="M959 763v17M966 763v17M973 763v17" stroke="#222" stroke-width="2"/><rect x="957" y="772" width="4" height="3" fill="#222"/><rect x="964" y="767" width="4" height="3" fill="#222"/><rect x="971" y="774" width="4" height="3" fill="#222"/><path d="M959 816l7-3 7 3-7 3zM959 821l7 3 7-3M959 826l7 3 7-3" stroke="#222" stroke-width="2.2" fill="#222"/><circle cx="966" cy="871" r="6" fill="none" stroke="#222" stroke-width="3.5" stroke-dasharray="2.5,2"/><circle cx="966" cy="871" r="4.5" fill="none" stroke="#222" stroke-width="2"/><path d="M958 915h17M958 921h17M958 927h17" stroke="#222" stroke-width="2.2"/><circle cx="966" cy="971" r="7" fill="none" stroke="#222" stroke-width="2"/><circle cx="966" cy="971" r="2" fill="#222"/><path d="M966 962v2M966 978v2M957 971h2M973 971h2" stroke="#222" stroke-width="2"/><path d="M961 1015h10v12l-5-4-5 4z" fill="#222"/></svg>
<div class="t" style="left:1057px;top:607px;font-size:12.4px;color:#222">已挂载的 主控 ID</div>
<div style="left:1152px;top:596px;width:199px;height:21px;background:#fafafa;border:1px solid #c8c8c8;border-radius:2px"></div>
<div class="t" style="left:1156px;top:607px;font-size:13px;color:#111">#1</div>
<div class="t" style="left:1357px;top:607px;font-size:13px;color:#222">主控选择:</div>
<div style="left:1414px;top:597px;width:74px;height:21px;background:#fff;border:1px solid #d6d6d6;border-radius:3px"></div>
<div class="t" style="left:1419px;top:607.5px;font-size:13.5px;color:#222">BCU01</div>
<svg style="position:absolute;left:1474px;top:602px" width="12" height="12"><path d="M0 0h12L6 11z" fill="#3cb043"/></svg>
<div class="t" style="left:1513px;top:607px;font-size:13px;color:#222">从控选择:</div>
<div style="left:1569px;top:597px;width:74px;height:21px;background:#fff;border:1px solid #d6d6d6;border-radius:3px"></div>
<div class="t" style="left:1574px;top:607.5px;font-size:13.5px;color:#222">BMU01</div>
<svg style="position:absolute;left:1629px;top:602px" width="12" height="12"><path d="M0 0h12L6 11z" fill="#3cb043"/></svg>
<div style="left:1825px;top:634px;width:20px;height:24px;background:#6caaf0;border-radius:4px 0 0 4px"></div>
<div class="t" style="left:1831px;top:646px;font-size:13px;color:#fff">刷</div>
<div style="left:1057px;top:661px;width:788px;height:260px;border-top:1px solid #a8a8a8;border-left:1px solid #c8c8c8;border-radius:4px 0 0 0"></div>
<div style="left:0;top:0;width:1859px;height:1080px;clip-path:inset(662px 14px 160px 1058px)">
<div style="left:1063px;top:673px;width:137px;height:35px;border:1px solid #e3e3e3;border-radius:3px;box-shadow:0 1px 1px rgba(0,0,0,.05)"></div>
<div class="t" style="left:1070px;top:672px;font-size:12px;color:#333;background:#fff;padding:0 2px">总电压</div>
<div class="r" style="left:1195px;top:691px;font-size:13.5px;color:#222">V</div>
<div style="left:1213px;top:673px;width:137px;height:35px;border:1px solid #e3e3e3;border-radius:3px;box-shadow:0 1px 1px rgba(0,0,0,.05)"></div>
<div class="t" style="left:1220px;top:672px;font-size:12px;color:#333;background:#fff;padding:0 2px">总电流</div>
<div class="r" style="left:1345px;top:691px;font-size:13.5px;color:#222">A</div>
<div style="left:1357px;top:661px;width:149px;height:48px;background:#f4f4f4;border:1px solid #e2e2e2;border-radius:2px"></div>
<div style="left:1363px;top:673px;width:137px;height:35px;border:1px solid #e3e3e3;border-radius:3px;box-shadow:0 1px 1px rgba(0,0,0,.05)"></div>
<div class="t" style="left:1370px;top:672px;font-size:12px;color:#333;background:#f4f4f4;padding:0 2px">最高单体电压</div>
<div class="r" style="left:1495px;top:691px;font-size:13.5px;color:#222">mV</div>
<div style="left:1513px;top:673px;width:137px;height:35px;border:1px solid #e3e3e3;border-radius:3px;box-shadow:0 1px 1px rgba(0,0,0,.05)"></div>
<div class="t" style="left:1520px;top:672px;font-size:12px;color:#333;background:#fff;padding:0 2px">最高单体电压编号</div>
<div style="left:1663px;top:673px;width:137px;height:35px;border:1px solid #e3e3e3;border-radius:3px;box-shadow:0 1px 1px rgba(0,0,0,.05)"></div>
<div class="t" style="left:1670px;top:672px;font-size:12px;color:#333;background:#fff;padding:0 2px">最高单体从控编号</div>
<div style="left:1813px;top:673px;width:137px;height:35px;border:1px solid #e3e3e3;border-radius:3px;box-shadow:0 1px 1px rgba(0,0,0,.05)"></div>
<div class="t" style="left:1820px;top:672px;font-size:12px;color:#333;background:#fff;padding:0 2px">最高单体从控中编号</div>
<div style="left:1063px;top:722px;width:137px;height:35px;border:1px solid #e3e3e3;border-radius:3px;box-shadow:0 1px 1px rgba(0,0,0,.05)"></div>
<div class="t" style="left:1070px;top:721px;font-size:12px;color:#333;background:#fff;padding:0 2px">最低单体电压</div>
<div class="r" style="left:1195px;top:740px;font-size:13.5px;color:#222">mV</div>
<div style="left:1213px;top:722px;width:137px;height:35px;border:1px solid #e3e3e3;border-radius:3px;box-shadow:0 1px 1px rgba(0,0,0,.05)"></div>
<div class="t" style="left:1220px;top:721px;font-size:12px;color:#333;background:#fff;padding:0 2px">最低单体电压编号</div>
<div style="left:1363px;top:722px;width:137px;height:35px;border:1px solid #e3e3e3;border-radius:3px;box-shadow:0 1px 1px rgba(0,0,0,.05)"></div>
<div class="t" style="left:1370px;top:721px;font-size:12px;color:#333;background:#fff;padding:0 2px">最低单体从控编号</div>
<div style="left:1513px;top:722px;width:137px;height:35px;border:1px solid #e3e3e3;border-radius:3px;box-shadow:0 1px 1px rgba(0,0,0,.05)"></div>
<div class="t" style="left:1520px;top:721px;font-size:12px;color:#333;background:#fff;padding:0 2px">最低单体从控中编号</div>
<div style="left:1663px;top:722px;width:137px;height:35px;border:1px solid #e3e3e3;border-radius:3px;box-shadow:0 1px 1px rgba(0,0,0,.05)"></div>
<div class="t" style="left:1670px;top:721px;font-size:12px;color:#333;background:#fff;padding:0 2px">平均电池电压</div>
<div class="r" style="left:1795px;top:740px;font-size:13.5px;color:#222">mV</div>
<div style="left:1813px;top:722px;width:137px;height:35px;border:1px solid #e3e3e3;border-radius:3px;box-shadow:0 1px 1px rgba(0,0,0,.05)"></div>
<div class="t" style="left:1820px;top:721px;font-size:12px;color:#333;background:#fff;padding:0 2px">单体最大压差</div>
<div class="r" style="left:1945px;top:740px;font-size:13.5px;color:#222">mV</div>
<div style="left:1063px;top:771px;width:137px;height:35px;border:1px solid #e3e3e3;border-radius:3px;box-shadow:0 1px 1px rgba(0,0,0,.05)"></div>
<div class="t" style="left:1070px;top:770px;font-size:12px;color:#333;background:#fff;padding:0 2px">最高电池温度</div>
<div class="r" style="left:1195px;top:789px;font-size:13.5px;color:#222">℃</div>
<div style="left:1213px;top:771px;width:137px;height:35px;border:1px solid #e3e3e3;border-radius:3px;box-shadow:0 1px 1px rgba(0,0,0,.05)"></div>
<div class="t" style="left:1220px;top:770px;font-size:12px;color:#333;background:#fff;padding:0 2px">最高电池温度编号</div>
<div style="left:1363px;top:771px;width:137px;height:35px;border:1px solid #e3e3e3;border-radius:3px;box-shadow:0 1px 1px rgba(0,0,0,.05)"></div>
<div class="t" style="left:1370px;top:770px;font-size:12px;color:#333;background:#fff;padding:0 2px">最高温度从控编号</div>
<div style="left:1513px;top:771px;width:137px;height:35px;border:1px solid #e3e3e3;border-radius:3px;box-shadow:0 1px 1px rgba(0,0,0,.05)"></div>
<div class="t" style="left:1520px;top:770px;font-size:12px;color:#333;background:#fff;padding:0 2px">最高温度从控中编号</div>
<div style="left:1663px;top:771px;width:137px;height:35px;border:1px solid #e3e3e3;border-radius:3px;box-shadow:0 1px 1px rgba(0,0,0,.05)"></div>
<div class="t" style="left:1670px;top:770px;font-size:12px;color:#333;background:#fff;padding:0 2px">最低电池温度</div>
<div class="r" style="left:1795px;top:789px;font-size:13.5px;color:#222">℃</div>
<div style="left:1813px;top:771px;width:137px;height:35px;border:1px solid #e3e3e3;border-radius:3px;box-shadow:0 1px 1px rgba(0,0,0,.05)"></div>
<div class="t" style="left:1820px;top:770px;font-size:12px;color:#333;background:#fff;padding:0 2px">最低电池温度编号</div>
<div style="left:1063px;top:820px;width:137px;height:35px;border:1px solid #e3e3e3;border-radius:3px;box-shadow:0 1px 1px rgba(0,0,0,.05)"></div>
<div class="t" style="left:1070px;top:819px;font-size:12px;color:#333;background:#fff;padding:0 2px">最低温度从控编号</div>
<div style="left:1213px;top:820px;width:137px;height:35px;border:1px solid #e3e3e3;border-radius:3px;box-shadow:0 1px 1px rgba(0,0,0,.05)"></div>
<div class="t" style="left:1220px;top:819px;font-size:12px;color:#333;background:#fff;padding:0 2px">最低温度从控中编号</div>
<div style="left:1363px;top:820px;width:137px;height:35px;border:1px solid #e3e3e3;border-radius:3px;box-shadow:0 1px 1px rgba(0,0,0,.05)"></div>
<div class="t" style="left:1370px;top:819px;font-size:12px;color:#333;background:#fff;padding:0 2px">单体平均温度</div>
<div class="r" style="left:1495px;top:838px;font-size:13.5px;color:#222">℃</div>
<div style="left:1513px;top:820px;width:137px;height:35px;border:1px solid #e3e3e3;border-radius:3px;box-shadow:0 1px 1px rgba(0,0,0,.05)"></div>
<div class="t" style="left:1520px;top:819px;font-size:12px;color:#333;background:#fff;padding:0 2px">电池最大温差</div>
<div class="r" style="left:1645px;top:838px;font-size:13.5px;color:#222">℃</div>
<div style="left:1663px;top:820px;width:137px;height:35px;border:1px solid #e3e3e3;border-radius:3px;box-shadow:0 1px 1px rgba(0,0,0,.05)"></div>
<div class="t" style="left:1670px;top:819px;font-size:12px;color:#333;background:#fff;padding:0 2px">最高极柱温度</div>
<div class="r" style="left:1795px;top:838px;font-size:13.5px;color:#222">℃</div>
<div style="left:1813px;top:820px;width:137px;height:35px;border:1px solid #e3e3e3;border-radius:3px;box-shadow:0 1px 1px rgba(0,0,0,.05)"></div>
<div class="t" style="left:1820px;top:819px;font-size:12px;color:#333;background:#fff;padding:0 2px">最高极柱温度编号</div>
<div style="left:1063px;top:869px;width:137px;height:35px;border:1px solid #e3e3e3;border-radius:3px;box-shadow:0 1px 1px rgba(0,0,0,.05)"></div>
<div class="t" style="left:1070px;top:868px;font-size:12px;color:#333;background:#fff;padding:0 2px">高压箱最高温度</div>
<div class="r" style="left:1195px;top:887px;font-size:13.5px;color:#222">℃</div>
<div style="left:1213px;top:869px;width:137px;height:35px;border:1px solid #e3e3e3;border-radius:3px;box-shadow:0 1px 1px rgba(0,0,0,.05)"></div>
<div class="t" style="left:1220px;top:868px;font-size:12px;color:#333;background:#fff;padding:0 2px">绝缘阻值</div>
<div class="r" style="left:1345px;top:887px;font-size:13.5px;color:#222">kΩ</div>
<div style="left:1363px;top:869px;width:137px;height:35px;border:1px solid #e3e3e3;border-radius:3px;box-shadow:0 1px 1px rgba(0,0,0,.05)"></div>
<div class="t" style="left:1370px;top:868px;font-size:12px;color:#333;background:#fff;padding:0 2px">供电采样电压</div>
<div class="r" style="left:1495px;top:887px;font-size:13.5px;color:#222">mV</div>
<div style="left:1513px;top:869px;width:137px;height:35px;border:1px solid #e3e3e3;border-radius:3px;box-shadow:0 1px 1px rgba(0,0,0,.05)"></div>
<div class="t" style="left:1520px;top:868px;font-size:12px;color:#333;background:#fff;padding:0 2px">负载总电压</div>
<div class="r" style="left:1645px;top:887px;font-size:13.5px;color:#222">V</div>
<div style="left:1663px;top:869px;width:137px;height:35px;border:1px solid #e3e3e3;border-radius:3px;box-shadow:0 1px 1px rgba(0,0,0,.05)"></div>
<div class="t" style="left:1670px;top:868px;font-size:12px;color:#333;background:#fff;padding:0 2px">标称容量</div>
<div class="r" style="left:1795px;top:887px;font-size:13.5px;color:#222">Ah</div>
<div style="left:1813px;top:869px;width:137px;height:35px;border:1px solid #e3e3e3;border-radius:3px;box-shadow:0 1px 1px rgba(0,0,0,.05)"></div>
<div class="t" style="left:1820px;top:868px;font-size:12px;color:#333;background:#fff;padding:0 2px">SOH</div>
<div class="r" style="left:1945px;top:887px;font-size:13.5px;color:#222">%</div>
<div style="left:1063px;top:918px;width:137px;height:35px;border:1px solid #e3e3e3;border-radius:3px;box-shadow:0 1px 1px rgba(0,0,0,.05)"></div>
<div class="t" style="left:1070px;top:917px;font-size:12px;color:#333;background:#fff;padding:0 2px">SOC</div>
<div style="left:1213px;top:918px;width:137px;height:35px;border:1px solid #e3e3e3;border-radius:3px;box-shadow:0 1px 1px rgba(0,0,0,.05)"></div>
<div class="t" style="left:1220px;top:917px;font-size:12px;color:#333;background:#fff;padding:0 2px">内部SOC</div>
<div style="left:1363px;top:918px;width:137px;height:35px;border:1px solid #e3e3e3;border-radius:3px;box-shadow:0 1px 1px rgba(0,0,0,.05)"></div>
<div class="t" style="left:1370px;top:917px;font-size:12px;color:#333;background:#fff;padding:0 2px">累计放电能量</div>
<div style="left:1513px;top:918px;width:137px;height:35px;border:1px solid #e3e3e3;border-radius:3px;box-shadow:0 1px 1px rgba(0,0,0,.05)"></div>
<div class="t" style="left:1520px;top:917px;font-size:12px;color:#333;background:#fff;padding:0 2px">累计充电能量</div>
</div>
<div style="left:1057px;top:920px;width:788px;height:2px;background:#8a8a8a"></div>
<div style="left:0;top:0;width:1859px;height:1080px;clip-path:inset(922px 14px 19px 1058px)">
<div style="left:1061px;top:926px;width:140px;height:25px;background:#cfcfcf;border:1px solid #9a9a9a;border-radius:2px;box-shadow:0 1px 1px rgba(0,0,0,.15)"></div>
<div class="c" style="left:1131px;top:939.5px;font-size:11.8px;color:#333">总电压差过大</div>
<div style="left:1211px;top:926px;width:140px;height:25px;background:#cfcfcf;border:1px solid #9a9a9a;border-radius:2px;box-shadow:0 1px 1px rgba(0,0,0,.15)"></div>
<div class="c" style="left:1281px;top:939.5px;font-size:11.8px;color:#333">熔断器故障</div>
<div style="left:1361px;top:926px;width:140px;height:25px;background:#cfcfcf;border:1px solid #9a9a9a;border-radius:2px;box-shadow:0 1px 1px rgba(0,0,0,.15)"></div>
<div class="c" style="left:1431px;top:939.5px;font-size:11.8px;color:#333">充电电流过高</div>
<div style="left:1511px;top:926px;width:140px;height:25px;background:#cfcfcf;border:1px solid #9a9a9a;border-radius:2px;box-shadow:0 1px 1px rgba(0,0,0,.15)"></div>
<div class="c" style="left:1581px;top:939.5px;font-size:11.8px;color:#333">极柱温度过高</div>
<div style="left:1661px;top:926px;width:140px;height:25px;background:#cfcfcf;border:1px solid #9a9a9a;border-radius:2px;box-shadow:0 1px 1px rgba(0,0,0,.15)"></div>
<div class="c" style="left:1731px;top:939.5px;font-size:11.8px;color:#333">电池温度差过大</div>
<div style="left:1061px;top:957px;width:140px;height:25px;background:#cfcfcf;border:1px solid #9a9a9a;border-radius:2px;box-shadow:0 1px 1px rgba(0,0,0,.15)"></div>
<div class="c" style="left:1131px;top:970.5px;font-size:11.8px;color:#333">充电电池过温</div>
<div style="left:1211px;top:957px;width:140px;height:25px;background:#cfcfcf;border:1px solid #9a9a9a;border-radius:2px;box-shadow:0 1px 1px rgba(0,0,0,.15)"></div>
<div class="c" style="left:1281px;top:970.5px;font-size:11.8px;color:#333">放电电池过温</div>
<div style="left:1361px;top:957px;width:140px;height:25px;background:#cfcfcf;border:1px solid #9a9a9a;border-radius:2px;box-shadow:0 1px 1px rgba(0,0,0,.15)"></div>
<div class="c" style="left:1431px;top:970.5px;font-size:11.8px;color:#333">单体电压过低</div>
<div style="left:1511px;top:957px;width:140px;height:25px;background:#cfcfcf;border:1px solid #9a9a9a;border-radius:2px;box-shadow:0 1px 1px rgba(0,0,0,.15)"></div>
<div class="c" style="left:1581px;top:970.5px;font-size:11.8px;color:#333">高压箱温度过高</div>
<div style="left:1661px;top:957px;width:140px;height:25px;background:#cfcfcf;border:1px solid #9a9a9a;border-radius:2px;box-shadow:0 1px 1px rgba(0,0,0,.15)"></div>
<div class="c" style="left:1731px;top:970.5px;font-size:11.8px;color:#333">SOC过高</div>
<div style="left:1061px;top:988px;width:140px;height:25px;background:#cfcfcf;border:1px solid #9a9a9a;border-radius:2px;box-shadow:0 1px 1px rgba(0,0,0,.15)"></div>
<div class="c" style="left:1131px;top:1001.5px;font-size:11.8px;color:#333">负端绝缘阻值过低</div>
<div style="left:1211px;top:988px;width:140px;height:25px;background:#cfcfcf;border:1px solid #9a9a9a;border-radius:2px;box-shadow:0 1px 1px rgba(0,0,0,.15)"></div>
<div class="c" style="left:1281px;top:1001.5px;font-size:11.8px;color:#333">绝缘阻值过低</div>
<div style="left:1361px;top:988px;width:140px;height:25px;background:#cfcfcf;border:1px solid #9a9a9a;border-radius:2px;box-shadow:0 1px 1px rgba(0,0,0,.15)"></div>
<div class="c" style="left:1431px;top:1001.5px;font-size:11.8px;color:#333">总电压过低</div>
<div style="left:1511px;top:988px;width:140px;height:25px;background:#cfcfcf;border:1px solid #9a9a9a;border-radius:2px;box-shadow:0 1px 1px rgba(0,0,0,.15)"></div>
<div class="c" style="left:1581px;top:1001.5px;font-size:11.8px;color:#333">模组过压</div>
<div style="left:1661px;top:988px;width:140px;height:25px;background:#cfcfcf;border:1px solid #9a9a9a;border-radius:2px;box-shadow:0 1px 1px rgba(0,0,0,.15)"></div>
<div class="c" style="left:1731px;top:1001.5px;font-size:11.8px;color:#333">从控概要故障</div>
<div style="left:1061px;top:1019px;width:140px;height:25px;background:#cfcfcf;border:1px solid #9a9a9a;border-radius:2px;box-shadow:0 1px 1px rgba(0,0,0,.15)"></div>
<div class="c" style="left:1131px;top:1032.5px;font-size:11.8px;color:#333">接触器粘连</div>
<div style="left:1211px;top:1019px;width:140px;height:25px;background:#cfcfcf;border:1px solid #9a9a9a;border-radius:2px;box-shadow:0 1px 1px rgba(0,0,0,.15)"></div>
<div class="c" style="left:1281px;top:1032.5px;font-size:11.8px;color:#333">EEPROM故障</div>
<div style="left:1361px;top:1019px;width:140px;height:25px;background:#cfcfcf;border:1px solid #9a9a9a;border-radius:2px;box-shadow:0 1px 1px rgba(0,0,0,.15)"></div>
<div class="c" style="left:1431px;top:1032.5px;font-size:11.8px;color:#333">绝缘检测故障</div>
<div style="left:1511px;top:1019px;width:140px;height:25px;background:#cfcfcf;border:1px solid #9a9a9a;border-radius:2px;box-shadow:0 1px 1px rgba(0,0,0,.15)"></div>
<div class="c" style="left:1581px;top:1032.5px;font-size:11.8px;color:#333">功能安全告警</div>
<div style="left:1661px;top:1019px;width:140px;height:25px;background:#cfcfcf;border:1px solid #9a9a9a;border-radius:2px;box-shadow:0 1px 1px rgba(0,0,0,.15)"></div>
<div class="c" style="left:1731px;top:1032.5px;font-size:11.8px;color:#333">放电电流过高</div>
<div style="left:1061px;top:1050px;width:140px;height:25px;background:#cfcfcf;border:1px solid #9a9a9a;border-radius:2px;box-shadow:0 1px 1px rgba(0,0,0,.15)"></div>
<div class="c" style="left:1131px;top:1063.5px;font-size:11.8px;color:#333">充电电池欠温</div>
<div style="left:1211px;top:1050px;width:140px;height:25px;background:#cfcfcf;border:1px solid #9a9a9a;border-radius:2px;box-shadow:0 1px 1px rgba(0,0,0,.15)"></div>
<div class="c" style="left:1281px;top:1063.5px;font-size:11.8px;color:#333">单体压差过大</div>
<div style="left:1361px;top:1050px;width:140px;height:25px;background:#cfcfcf;border:1px solid #9a9a9a;border-radius:2px;box-shadow:0 1px 1px rgba(0,0,0,.15)"></div>
<div class="c" style="left:1431px;top:1063.5px;font-size:11.8px;color:#333">SOH过低</div>
<div style="left:1511px;top:1050px;width:140px;height:25px;background:#cfcfcf;border:1px solid #9a9a9a;border-radius:2px;box-shadow:0 1px 1px rgba(0,0,0,.15)"></div>
<div class="c" style="left:1581px;top:1063.5px;font-size:11.8px;color:#333">正端绝缘阻值过低</div>
<div style="left:1661px;top:1050px;width:140px;height:25px;background:#cfcfcf;border:1px solid #9a9a9a;border-radius:2px;box-shadow:0 1px 1px rgba(0,0,0,.15)"></div>
<div class="c" style="left:1731px;top:1063.5px;font-size:11.8px;color:#333">总电压过高</div>
</div>
<div style="left:948px;top:1061px;width:897px;height:17px;background:#f0f0f0"></div>
<div style="left:1060px;top:1068px;width:694px;height:3px;background:#8a8a8a"></div>
<div style="left:943px;top:1061px;width:5px;height:17px;background:#f0f0f0"></div>
<div style="left:1845px;top:994px;width:14px;height:84px;background:#f3f3f3"></div>
<div style="left:0px;top:1078px;width:1859px;height:2px;background:#2a2a2a"></div>
<div style="left:1159px;top:85px;width:632px;height:483px;background:#f0f0f0;border-radius:8px;box-shadow:0 0 6px rgba(0,0,0,.4);overflow:hidden"></div>
<div style="left:1159px;top:85px;width:632px;height:28px;background:#f3f3f3;border-radius:8px 8px 0 0"></div>
<svg style="position:absolute;left:1167px;top:90px" width="16" height="17" viewBox="0 0 16 17"><path d="M5 0h6.5a4 4 0 0 1 3.2 6.8a4.3 4.3 0 0 1 -2.7 9.2h-7z" fill="#1f8a5a"/><path d="M8 3h3a1.6 1.6 0 0 1 0 3.2h-3zM8 9.5h3.5a1.8 1.8 0 0 1 0 3.6h-3.5z" fill="#fff"/><path d="M0 5l4-3v12h5v3h-9z" fill="#111"/></svg>
<div class="t" style="left:1188px;top:99px;font-size:12.3px;color:#8a8a8a">LANBTS电池测试系统2.12.6.30 - [C:\Users\LANBTS\Desktop\Data2023\B_20230...</div>
<div style="left:1671px;top:99px;width:12px;height:1px;background:#777"></div>
<div style="left:1716px;top:93px;width:11px;height:11px;border:1px solid #777"></div>
<div class="t" style="left:1761px;top:99px;font-size:15px;color:#777">✕</div>
<svg style="position:absolute;left:1167px;top:119px" width="16" height="17" viewBox="0 0 16 17"><path d="M5 0h6.5a4 4 0 0 1 3.2 6.8a4.3 4.3 0 0 1 -2.7 9.2h-7z" fill="#1f8a5a"/><path d="M8 3h3a1.6 1.6 0 0 1 0 3.2h-3zM8 9.5h3.5a1.8 1.8 0 0 1 0 3.6h-3.5z" fill="#fff"/><path d="M0 5l4-3v12h5v3h-9z" fill="#111"/></svg>
<div class="t" style="left:1193px;top:128px;font-size:12px;color:#111">文件(F)</div>
<div class="t" style="left:1252px;top:128px;font-size:12px;color:#111">设置中心(S)</div>
<div class="t" style="left:1335px;top:128px;font-size:12px;color:#111">工具(T)</div>
<div class="t" style="left:1393px;top:128px;font-size:12px;color:#111">数据(D)</div>
<div class="t" style="left:1455px;top:128px;font-size:12px;color:#111">窗口(W)</div>
<div class="t" style="left:1519px;top:128px;font-size:12px;color:#111">帮助(H)</div>
<div style="left:1736px;top:131px;width:8px;height:2px;background:#111"></div>
<svg style="position:absolute;left:1754px;top:120px" width="12" height="12"><path d="M3 1h8v7h-2M1 4h7v7h-7z" stroke="#111" stroke-width="1.6" fill="none"/></svg>
<div class="t" style="left:1774px;top:127px;font-size:13px;color:#000;font-weight:bold">✕</div>
<div style="left:1162px;top:140px;width:626px;height:31px;background:linear-gradient(#fbfbfb,#eaeaea)"></div>
<div style="left:1162px;top:171px;width:626px;height:2px;background:#9a9a9a"></div>
<svg style="position:absolute;left:0;top:0" width="1859" height="1080"><path d="M1163 145v18" stroke="#999" stroke-width="1.5" stroke-dasharray="2,2"/><path d="M1172 153h8l2 2h14l-3 12h-21z" fill="#f2c232"/><path d="M1177 152c3-5 8-6 12-6v-2l5 4-5 4v-2c-4 0-8 1-12 2z" fill="#3cb043"/><path d="M1203 144h17l6 6v17h-23z" fill="#3b9bd8"/><rect x="1206" y="157" width="12" height="8" fill="#f4f4f4"/><rect x="1208" y="145" width="8" height="5" fill="#e8f4fc"/><path d="M1214 149h5v6h5l-7.5 10-7.5-10h5z" fill="#36c43a"/><rect x="1238" y="145" width="1" height="22" fill="#c8c8c8"/><path d="M1251 147l13-3v23l-13-3z" fill="#3f4a45"/><rect x="1262" y="148" width="10" height="16" fill="#3f4a45"/><path d="M1265 150h5M1265 154h5M1265 158h5" stroke="#fff" stroke-width="2" stroke-dasharray="2,1"/><rect x="1265" y="164" width="8" height="2" fill="#222"/><rect x="1285" y="146" width="14" height="17" fill="#5a9a7a"/><path d="M1285 151h14M1285 156h14M1290 146v17M1295 146v17" stroke="#dff" stroke-width="1"/><path d="M1301 147v15" stroke="#3a8a6a" stroke-width="2"/><path d="M1287 164l10-6" stroke="#6a7ad8" stroke-width="1.5"/><path d="M1314 145v20h21" stroke="#333" stroke-width="1.8" fill="none"/><path d="M1315 162c5-10 9-2 13-6s4-6 7-9" stroke="#333" stroke-width="1.5" fill="none"/><circle cx="1325" cy="150" r="3.5" fill="none" stroke="#777" stroke-width="2" stroke-dasharray="1.8,1.2"/><rect x="1345" y="146" width="19" height="18" rx="2" fill="#fff" stroke="#e26262" stroke-width="2"/><rect x="1345" y="146" width="19" height="4" fill="#e26262"/><path d="M1348 154h10M1348 158h6" stroke="#e89090" stroke-width="1.5"/><circle cx="1359" cy="161" r="6" fill="#e05050"/><rect x="1358" y="158" width="2" height="6" fill="#fff"/><rect x="1378" y="145" width="1" height="22" fill="#c8c8c8"/><path d="M1390 144h24M1390 167h24M1399 148v15M1405 148v15" stroke="#333" stroke-width="1.8"/><path d="M1396 150v11l-5-5.5zM1408 150v11l5-5.5z" fill="#3cb043"/><path d="M1425 145h-4v21h4M1441 145h4v21h-4" stroke="#444" stroke-width="1.8" fill="none" stroke-dasharray="3,2"/><path d="M1425 155.5h7M1441 155.5h-7" stroke="#3cb043" stroke-width="2"/><path d="M1430 151l4 4.5-4 4.5zM1436 151l-4 4.5 4 4.5z" fill="#3cb043"/><path d="M1453 144v23M1474 144v23M1457 155.5h13" stroke="#444" stroke-width="1.8"/><path d="M1459 151h9l-4.5-6zM1459 160h9l-4.5 6z" fill="#f0a040"/><path d="M1484 150v-5h5M1502 145h5v5M1484 161v5h5M1502 166h5v-5" stroke="#444" stroke-width="1.8" fill="none"/><path d="M1491 149h9l-4.5 6zM1491 162h9l-4.5-6z" fill="#f0a040"/><path d="M1515 150v-5h5M1533 145h5v5M1515 161v5h5M1533 166h5v-5" stroke="#555" stroke-width="1.8" fill="none"/><rect x="1519" y="149" width="15" height="13" fill="none" stroke="#555" stroke-width="2"/><rect x="1549" y="145" width="1" height="22" fill="#c8c8c8"/><rect x="1562" y="145" width="23" height="21" fill="#6cc8c8" stroke="#333" stroke-width="1.5"/><path d="M1573.5 145v21" stroke="#333" stroke-width="1.5"/><rect x="1595" y="146" width="8" height="19" fill="#ddd" stroke="#3cb043" stroke-width="2"/><path d="M1606 146v19M1614 146v19" stroke="#888" stroke-width="1" stroke-dasharray="2,2"/><path d="M1604 155.5l7-5v10z" fill="#2aa0d0"/><rect x="1637" y="146" width="8" height="19" fill="#ddd" stroke="#3cb043" stroke-width="2"/><path d="M1624 146v19M1632 146v19" stroke="#888" stroke-width="1" stroke-dasharray="2,2"/><path d="M1634 155.5l-7-5v10z" fill="#2aa0d0"/><rect x="1658" y="145" width="1" height="22" fill="#c8c8c8"/><path d="M1671 146h6v5h-6zM1671 153h6v5h-6zM1671 160h6v5h-6z" fill="#3aaa80"/><path d="M1679 146h15v5h-15zM1679 153h15v5h-15zM1679 160h15v5h-15z" fill="#2f9f78"/><path d="M1702 146h6v4h-6z" fill="#2f9f78"/><path d="M1704 150v14h4M1704 156h4" stroke="#5a6ad0" stroke-width="1" fill="none"/><path d="M1710 146h14v4h-14zM1710 152h14v4h-14zM1710 158h14v4h-14zM1710 163h14v3h-14z" fill="#2f9f78"/><path d="M1733 146v20" stroke="#6a6ad0" stroke-width="1"/><path d="M1736 146h5v20h-5z" fill="#8ad08a"/><path d="M1742 146h14v3h-14z" fill="#3a6aa0"/><path d="M1742 150h14v3h-14z" fill="#e0a040"/><path d="M1742 154h14v3h-14z" fill="#3a6aa0"/><path d="M1742 158h14v3h-14z" fill="#7a7a5a"/><path d="M1742 162h14v3h-14z" fill="#3a6aa0"/><rect x="1778" y="158" width="10" height="12" fill="#ccc"/><path d="M1780 161h6M1780 163h6l-3 4z" stroke="#222" stroke-width="1" fill="#222"/></svg>
<div style="left:1162px;top:173px;width:626px;height:23px;background:#f0f0f0"></div>
<div style="left:1166px;top:174px;width:97px;height:22px;background:#f6f6f6"></div>
<div style="left:1162px;top:173px;width:590px;height:23px;overflow:hidden">
<div class="t" style="left:10px;top:12px;font-size:12.5px;color:#111">时间-电压&电流</div>
<div class="t" style="left:105px;top:12px;font-size:12.5px;color:#111">电压&容量</div>
<div class="t" style="left:174px;top:12px;font-size:12.5px;color:#111">电压&比容量</div>
<div class="t" style="left:256px;top:12px;font-size:12.5px;color:#111">循环-库伦效率&容量</div>
<div class="t" style="left:376px;top:12px;font-size:12.5px;color:#111">循环-库伦效率&比容量</div>
<div class="t" style="left:509px;top:12px;font-size:12.5px;color:#111">循环-终压&容量</div>
</div>
<div style="left:1752px;top:175px;width:14px;height:16px;background:#e8e8e8;border:1px solid #ccc"></div>
<div style="left:1766px;top:175px;width:14px;height:16px;background:#e8e8e8;border:1px solid #ccc"></div>
<div class="t" style="left:1756px;top:183px;font-size:10px;color:#111">◂</div>
<div class="t" style="left:1770px;top:183px;font-size:10px;color:#111">▸</div>
<div style="left:1787px;top:173px;width:2px;height:395px;background:#333"></div>
<div style="left:1165px;top:195px;width:614px;height:338px;background:linear-gradient(#e9e9e9,#f4f4f4 60%,#fff);border-right:2px solid #aaa;border-bottom:1px solid #777"></div>
<div style="left:1225px;top:231px;width:489px;height:266px;background:linear-gradient(#f0f0f0,#ffffff);border:2px solid #222"></div>
<svg style="position:absolute;left:0;top:0" width="1859" height="1080"><line x1="1219" y1="495.3" x2="1225" y2="495.3" stroke="#555" stroke-width="1"/><line x1="1227" y1="474.6" x2="1712" y2="474.6" stroke="#999" stroke-width="0.9" stroke-dasharray="3,2"/><line x1="1219" y1="474.6" x2="1225" y2="474.6" stroke="#555" stroke-width="1"/><line x1="1222" y1="484.9" x2="1225" y2="484.9" stroke="#777" stroke-width="1"/><line x1="1227" y1="453.8" x2="1712" y2="453.8" stroke="#999" stroke-width="0.9" stroke-dasharray="3,2"/><line x1="1219" y1="453.8" x2="1225" y2="453.8" stroke="#555" stroke-width="1"/><line x1="1222" y1="464.1" x2="1225" y2="464.1" stroke="#777" stroke-width="1"/><line x1="1227" y1="433.1" x2="1712" y2="433.1" stroke="#999" stroke-width="0.9" stroke-dasharray="3,2"/><line x1="1219" y1="433.1" x2="1225" y2="433.1" stroke="#555" stroke-width="1"/><line x1="1222" y1="443.4" x2="1225" y2="443.4" stroke="#777" stroke-width="1"/><line x1="1227" y1="412.3" x2="1712" y2="412.3" stroke="#999" stroke-width="0.9" stroke-dasharray="3,2"/><line x1="1219" y1="412.3" x2="1225" y2="412.3" stroke="#555" stroke-width="1"/><line x1="1222" y1="422.6" x2="1225" y2="422.6" stroke="#777" stroke-width="1"/><line x1="1227" y1="391.6" x2="1712" y2="391.6" stroke="#999" stroke-width="0.9" stroke-dasharray="3,2"/><line x1="1219" y1="391.6" x2="1225" y2="391.6" stroke="#555" stroke-width="1"/><line x1="1222" y1="401.9" x2="1225" y2="401.9" stroke="#777" stroke-width="1"/><line x1="1227" y1="370.9" x2="1712" y2="370.9" stroke="#999" stroke-width="0.9" stroke-dasharray="3,2"/><line x1="1219" y1="370.9" x2="1225" y2="370.9" stroke="#555" stroke-width="1"/><line x1="1222" y1="381.2" x2="1225" y2="381.2" stroke="#777" stroke-width="1"/><line x1="1227" y1="350.1" x2="1712" y2="350.1" stroke="#999" stroke-width="0.9" stroke-dasharray="3,2"/><line x1="1219" y1="350.1" x2="1225" y2="350.1" stroke="#555" stroke-width="1"/><line x1="1222" y1="360.4" x2="1225" y2="360.4" stroke="#777" stroke-width="1"/><line x1="1227" y1="329.4" x2="1712" y2="329.4" stroke="#999" stroke-width="0.9" stroke-dasharray="3,2"/><line x1="1219" y1="329.4" x2="1225" y2="329.4" stroke="#555" stroke-width="1"/><line x1="1222" y1="339.7" x2="1225" y2="339.7" stroke="#777" stroke-width="1"/><line x1="1227" y1="308.6" x2="1712" y2="308.6" stroke="#999" stroke-width="0.9" stroke-dasharray="3,2"/><line x1="1219" y1="308.6" x2="1225" y2="308.6" stroke="#555" stroke-width="1"/><line x1="1222" y1="318.9" x2="1225" y2="318.9" stroke="#777" stroke-width="1"/><line x1="1227" y1="287.9" x2="1712" y2="287.9" stroke="#999" stroke-width="0.9" stroke-dasharray="3,2"/><line x1="1219" y1="287.9" x2="1225" y2="287.9" stroke="#555" stroke-width="1"/><line x1="1222" y1="298.2" x2="1225" y2="298.2" stroke="#777" stroke-width="1"/><line x1="1227" y1="267.2" x2="1712" y2="267.2" stroke="#999" stroke-width="0.9" stroke-dasharray="3,2"/><line x1="1219" y1="267.2" x2="1225" y2="267.2" stroke="#555" stroke-width="1"/><line x1="1222" y1="277.5" x2="1225" y2="277.5" stroke="#777" stroke-width="1"/><line x1="1227" y1="246.4" x2="1712" y2="246.4" stroke="#999" stroke-width="0.9" stroke-dasharray="3,2"/><line x1="1219" y1="246.4" x2="1225" y2="246.4" stroke="#555" stroke-width="1"/><line x1="1222" y1="256.7" x2="1225" y2="256.7" stroke="#777" stroke-width="1"/><line x1="1285.6" y1="233" x2="1285.6" y2="495" stroke="#999" stroke-width="0.9" stroke-dasharray="3,2"/><line x1="1285.6" y1="497" x2="1285.6" y2="503" stroke="#555" stroke-width="1"/><line x1="1270.5" y1="497" x2="1270.5" y2="500" stroke="#777" stroke-width="1"/><line x1="1255.4" y1="497" x2="1255.4" y2="500" stroke="#777" stroke-width="1"/><line x1="1240.3" y1="497" x2="1240.3" y2="500" stroke="#777" stroke-width="1"/><line x1="1346.0" y1="233" x2="1346.0" y2="495" stroke="#999" stroke-width="0.9" stroke-dasharray="3,2"/><line x1="1346.0" y1="497" x2="1346.0" y2="503" stroke="#555" stroke-width="1"/><line x1="1330.9" y1="497" x2="1330.9" y2="500" stroke="#777" stroke-width="1"/><line x1="1315.8" y1="497" x2="1315.8" y2="500" stroke="#777" stroke-width="1"/><line x1="1300.7" y1="497" x2="1300.7" y2="500" stroke="#777" stroke-width="1"/><line x1="1406.4" y1="233" x2="1406.4" y2="495" stroke="#999" stroke-width="0.9" stroke-dasharray="3,2"/><line x1="1406.4" y1="497" x2="1406.4" y2="503" stroke="#555" stroke-width="1"/><line x1="1391.3" y1="497" x2="1391.3" y2="500" stroke="#777" stroke-width="1"/><line x1="1376.2" y1="497" x2="1376.2" y2="500" stroke="#777" stroke-width="1"/><line x1="1361.1" y1="497" x2="1361.1" y2="500" stroke="#777" stroke-width="1"/><line x1="1466.8" y1="233" x2="1466.8" y2="495" stroke="#999" stroke-width="0.9" stroke-dasharray="3,2"/><line x1="1466.8" y1="497" x2="1466.8" y2="503" stroke="#555" stroke-width="1"/><line x1="1451.7" y1="497" x2="1451.7" y2="500" stroke="#777" stroke-width="1"/><line x1="1436.6" y1="497" x2="1436.6" y2="500" stroke="#777" stroke-width="1"/><line x1="1421.5" y1="497" x2="1421.5" y2="500" stroke="#777" stroke-width="1"/><line x1="1527.2" y1="233" x2="1527.2" y2="495" stroke="#999" stroke-width="0.9" stroke-dasharray="3,2"/><line x1="1527.2" y1="497" x2="1527.2" y2="503" stroke="#555" stroke-width="1"/><line x1="1512.1" y1="497" x2="1512.1" y2="500" stroke="#777" stroke-width="1"/><line x1="1497.0" y1="497" x2="1497.0" y2="500" stroke="#777" stroke-width="1"/><line x1="1481.9" y1="497" x2="1481.9" y2="500" stroke="#777" stroke-width="1"/><line x1="1587.6" y1="233" x2="1587.6" y2="495" stroke="#999" stroke-width="0.9" stroke-dasharray="3,2"/><line x1="1587.6" y1="497" x2="1587.6" y2="503" stroke="#555" stroke-width="1"/><line x1="1572.5" y1="497" x2="1572.5" y2="500" stroke="#777" stroke-width="1"/><line x1="1557.4" y1="497" x2="1557.4" y2="500" stroke="#777" stroke-width="1"/><line x1="1542.3" y1="497" x2="1542.3" y2="500" stroke="#777" stroke-width="1"/><line x1="1648.0" y1="233" x2="1648.0" y2="495" stroke="#999" stroke-width="0.9" stroke-dasharray="3,2"/><line x1="1648.0" y1="497" x2="1648.0" y2="503" stroke="#555" stroke-width="1"/><line x1="1632.9" y1="497" x2="1632.9" y2="500" stroke="#777" stroke-width="1"/><line x1="1617.8" y1="497" x2="1617.8" y2="500" stroke="#777" stroke-width="1"/><line x1="1602.7" y1="497" x2="1602.7" y2="500" stroke="#777" stroke-width="1"/><line x1="1708.4" y1="233" x2="1708.4" y2="495" stroke="#999" stroke-width="0.9" stroke-dasharray="3,2"/><line x1="1708.4" y1="497" x2="1708.4" y2="503" stroke="#555" stroke-width="1"/><line x1="1693.3" y1="497" x2="1693.3" y2="500" stroke="#777" stroke-width="1"/><line x1="1678.2" y1="497" x2="1678.2" y2="500" stroke="#777" stroke-width="1"/><line x1="1663.1" y1="497" x2="1663.1" y2="500" stroke="#777" stroke-width="1"/><line x1="1714" y1="492.4" x2="1720" y2="492.4" stroke="#555" stroke-width="1"/><line x1="1714" y1="474.1" x2="1720" y2="474.1" stroke="#555" stroke-width="1"/><line x1="1714" y1="455.8" x2="1720" y2="455.8" stroke="#555" stroke-width="1"/><line x1="1714" y1="437.4" x2="1720" y2="437.4" stroke="#555" stroke-width="1"/><line x1="1714" y1="419.1" x2="1720" y2="419.1" stroke="#555" stroke-width="1"/><line x1="1714" y1="400.8" x2="1720" y2="400.8" stroke="#555" stroke-width="1"/><line x1="1714" y1="382.5" x2="1720" y2="382.5" stroke="#555" stroke-width="1"/><line x1="1714" y1="364.2" x2="1720" y2="364.2" stroke="#555" stroke-width="1"/><line x1="1714" y1="345.8" x2="1720" y2="345.8" stroke="#555" stroke-width="1"/><line x1="1714" y1="327.5" x2="1720" y2="327.5" stroke="#555" stroke-width="1"/><line x1="1714" y1="309.2" x2="1720" y2="309.2" stroke="#555" stroke-width="1"/><line x1="1714" y1="290.9" x2="1720" y2="290.9" stroke="#555" stroke-width="1"/><line x1="1714" y1="272.6" x2="1720" y2="272.6" stroke="#555" stroke-width="1"/><line x1="1714" y1="254.2" x2="1720" y2="254.2" stroke="#555" stroke-width="1"/><line x1="1714" y1="235.9" x2="1720" y2="235.9" stroke="#555" stroke-width="1"/><path d="M1227,492.5 L1231.2,492.5 L1231.2,370.8 L1235,370.3 L1238,371 L1259,371 L1262,372.2 L1713,372.2" stroke="#e03c3c" stroke-width="2.2" fill="none"/><path d="M1226,357 L1231.5,357 L1231.5,292 C1232.5,275 1234,262 1236,258 C1238,252 1239,250 1241,249 C1245,245 1249,244 1253,243 C1260,241 1266,240 1275,239.3 L1296,238 L1325,236.5 C1360,236 1390,235.2 1405,235 C1440,235.3 1470,236.2 1500,236.5 L1713,237.5" stroke="#3d8fd8" stroke-width="2.2" fill="none"/></svg>
<div class="r" style="left:1215px;top:493.5px;font-size:12.5px;color:#111;letter-spacing:0.3px">1300.00</div>
<div class="r" style="left:1215px;top:474.06px;font-size:12.5px;color:#111;letter-spacing:0.3px">1310.00</div>
<div class="r" style="left:1215px;top:453.32px;font-size:12.5px;color:#111;letter-spacing:0.3px">1320.00</div>
<div class="r" style="left:1215px;top:432.58000000000004px;font-size:12.5px;color:#111;letter-spacing:0.3px">1330.00</div>
<div class="r" style="left:1215px;top:411.84000000000003px;font-size:12.5px;color:#111;letter-spacing:0.3px">1340.00</div>
<div class="r" style="left:1215px;top:391.1px;font-size:12.5px;color:#111;letter-spacing:0.3px">1350.00</div>
<div class="r" style="left:1215px;top:370.36px;font-size:12.5px;color:#111;letter-spacing:0.3px">1360.00</div>
<div class="r" style="left:1215px;top:349.62px;font-size:12.5px;color:#111;letter-spacing:0.3px">1370.00</div>
<div class="r" style="left:1215px;top:328.88px;font-size:12.5px;color:#111;letter-spacing:0.3px">1380.00</div>
<div class="r" style="left:1215px;top:308.14px;font-size:12.5px;color:#111;letter-spacing:0.3px">1390.00</div>
<div class="r" style="left:1215px;top:287.40000000000003px;font-size:12.5px;color:#111;letter-spacing:0.3px">1400.00</div>
<div class="r" style="left:1215px;top:266.66px;font-size:12.5px;color:#111;letter-spacing:0.3px">1410.00</div>
<div class="r" style="left:1215px;top:245.92000000000002px;font-size:12.5px;color:#111;letter-spacing:0.3px">1420.00</div>
<div class="t" style="left:1723px;top:492.4px;font-size:12.5px;color:#111;letter-spacing:0.3px">0.00</div>
<div class="t" style="left:1723px;top:474.08px;font-size:12.5px;color:#111;letter-spacing:0.3px">20.00</div>
<div class="t" style="left:1723px;top:455.76px;font-size:12.5px;color:#111;letter-spacing:0.3px">40.00</div>
<div class="t" style="left:1723px;top:437.44px;font-size:12.5px;color:#111;letter-spacing:0.3px">60.00</div>
<div class="t" style="left:1723px;top:419.12px;font-size:12.5px;color:#111;letter-spacing:0.3px">80.00</div>
<div class="t" style="left:1723px;top:400.79999999999995px;font-size:12.5px;color:#111;letter-spacing:0.3px">100.00</div>
<div class="t" style="left:1723px;top:382.47999999999996px;font-size:12.5px;color:#111;letter-spacing:0.3px">120.00</div>
<div class="t" style="left:1723px;top:364.15999999999997px;font-size:12.5px;color:#111;letter-spacing:0.3px">140.00</div>
<div class="t" style="left:1723px;top:345.84px;font-size:12.5px;color:#111;letter-spacing:0.3px">160.00</div>
<div class="t" style="left:1723px;top:327.52px;font-size:12.5px;color:#111;letter-spacing:0.3px">180.00</div>
<div class="t" style="left:1723px;top:309.2px;font-size:12.5px;color:#111;letter-spacing:0.3px">200.00</div>
<div class="t" style="left:1723px;top:290.88px;font-size:12.5px;color:#111;letter-spacing:0.3px">220.00</div>
<div class="t" style="left:1723px;top:272.55999999999995px;font-size:12.5px;color:#111;letter-spacing:0.3px">240.00</div>
<div class="t" style="left:1723px;top:254.23999999999998px;font-size:12.5px;color:#111;letter-spacing:0.3px">260.00</div>
<div class="t" style="left:1723px;top:235.91999999999996px;font-size:12.5px;color:#111;letter-spacing:0.3px">280.00</div>
<div class="c" style="left:1285.6px;top:510px;font-size:12.5px;color:#111;letter-spacing:0.4px">00:01:40</div>
<div class="c" style="left:1346.0px;top:510px;font-size:12.5px;color:#111;letter-spacing:0.4px">00:03:20</div>
<div class="c" style="left:1406.3999999999999px;top:510px;font-size:12.5px;color:#111;letter-spacing:0.4px">00:05:00</div>
<div class="c" style="left:1466.8px;top:510px;font-size:12.5px;color:#111;letter-spacing:0.4px">00:06:40</div>
<div class="c" style="left:1527.1999999999998px;top:510px;font-size:12.5px;color:#111;letter-spacing:0.4px">00:08:20</div>
<div class="c" style="left:1587.6px;top:510px;font-size:12.5px;color:#111;letter-spacing:0.4px">00:10:00</div>
<div class="c" style="left:1648.0px;top:510px;font-size:12.5px;color:#111;letter-spacing:0.4px">00:11:40</div>
<div class="c" style="left:1708.3999999999999px;top:510px;font-size:12.5px;color:#111;letter-spacing:0.4px">00:13:20</div>
<div class="c" style="left:1468px;top:524px;font-size:13px;color:#111">测试时间</div>
<div class="c" style="left:1436px;top:217px;font-size:12.5px;color:#1a1a5a;letter-spacing:0.3px">B_20230716175158_1_1.bts</div>
<div class="t" style="left:1178px;top:209px;font-size:10.5px;color:#222;font-family:'Liberation Mono',monospace;font-weight:bold">Y1:</div>
<div class="t" style="left:1178px;top:221px;font-size:10.5px;color:#4a9ad8">电压(V)</div>
<div class="t" style="left:1683px;top:209px;font-size:10.5px;color:#222;font-family:'Liberation Mono',monospace;font-weight:bold">Y2:</div>
<div class="t" style="left:1683px;top:221px;font-size:10.5px;color:#e03c3c">电流(A)</div>
<div style="left:1161px;top:535px;width:628px;height:33px;background:#f0f0f0"></div>
<div style="left:1162px;top:543px;width:56px;height:22px;background:#fff;border:1px solid #ddd"></div>
<div class="t" style="left:1178px;top:553px;font-size:13px;color:#222">1</div>
<div style="left:1201px;top:545px;width:15px;height:18px;background:#e6e6e6;border:1px solid #bbb"></div>
<div class="c" style="left:1208px;top:550px;font-size:7px;color:#111">▲</div>
<div class="c" style="left:1208px;top:558px;font-size:7px;color:#111">▼</div>
<div style="left:1221px;top:543px;width:27px;height:22px;background:#fff;border:1px solid #ddd;border-radius:3px"></div>
<div class="c" style="left:1234px;top:554px;font-size:12px;color:#333">&lt;</div>
<div style="left:1249px;top:543px;width:419px;height:22px;background:#5cb85c;border:1px solid #4a9a4a"></div>
<div style="left:1669px;top:543px;width:27px;height:22px;background:#fff;border:1px solid #ddd;border-radius:3px"></div>
<div class="c" style="left:1682px;top:554px;font-size:12px;color:#333">&gt;</div>
<div style="left:1700px;top:543px;width:56px;height:22px;background:#fff;border:1px solid #ddd"></div>
<div class="t" style="left:1716px;top:553px;font-size:13px;color:#222">1</div>
<div style="left:1739px;top:545px;width:15px;height:18px;background:#e6e6e6;border:1px solid #bbb"></div>
<div class="c" style="left:1746px;top:550px;font-size:7px;color:#111">▲</div>
<div class="c" style="left:1746px;top:558px;font-size:7px;color:#111">▼</div>
<div style="left:1758px;top:543px;width:28px;height:22px;background:#fff;border:1px solid #ddd;border-radius:3px"></div>
<div class="c" style="left:1772px;top:554px;font-size:11px;color:#333">&gt;&gt;</div>
<div style="left:702px;top:522px;width:442px;height:50px;background:#1c1c1c;box-shadow:0 2px 6px rgba(0,0,0,.4)"></div>
<div class="t" style="left:722px;top:545px;font-size:13px;color:#e6e6e6">你当前使用的向日葵版本过旧，更新软件享更流畅远控</div>
<div class="t" style="left:1046px;top:545px;font-size:13px;color:#2f8ff0">立即更新</div>
<svg style="position:absolute;left:1111px;top:540px" width="12" height="12"><path d="M1 1L11 11M11 1L1 11" stroke="#ddd" stroke-width="1.5"/></svg>
</body></html>
